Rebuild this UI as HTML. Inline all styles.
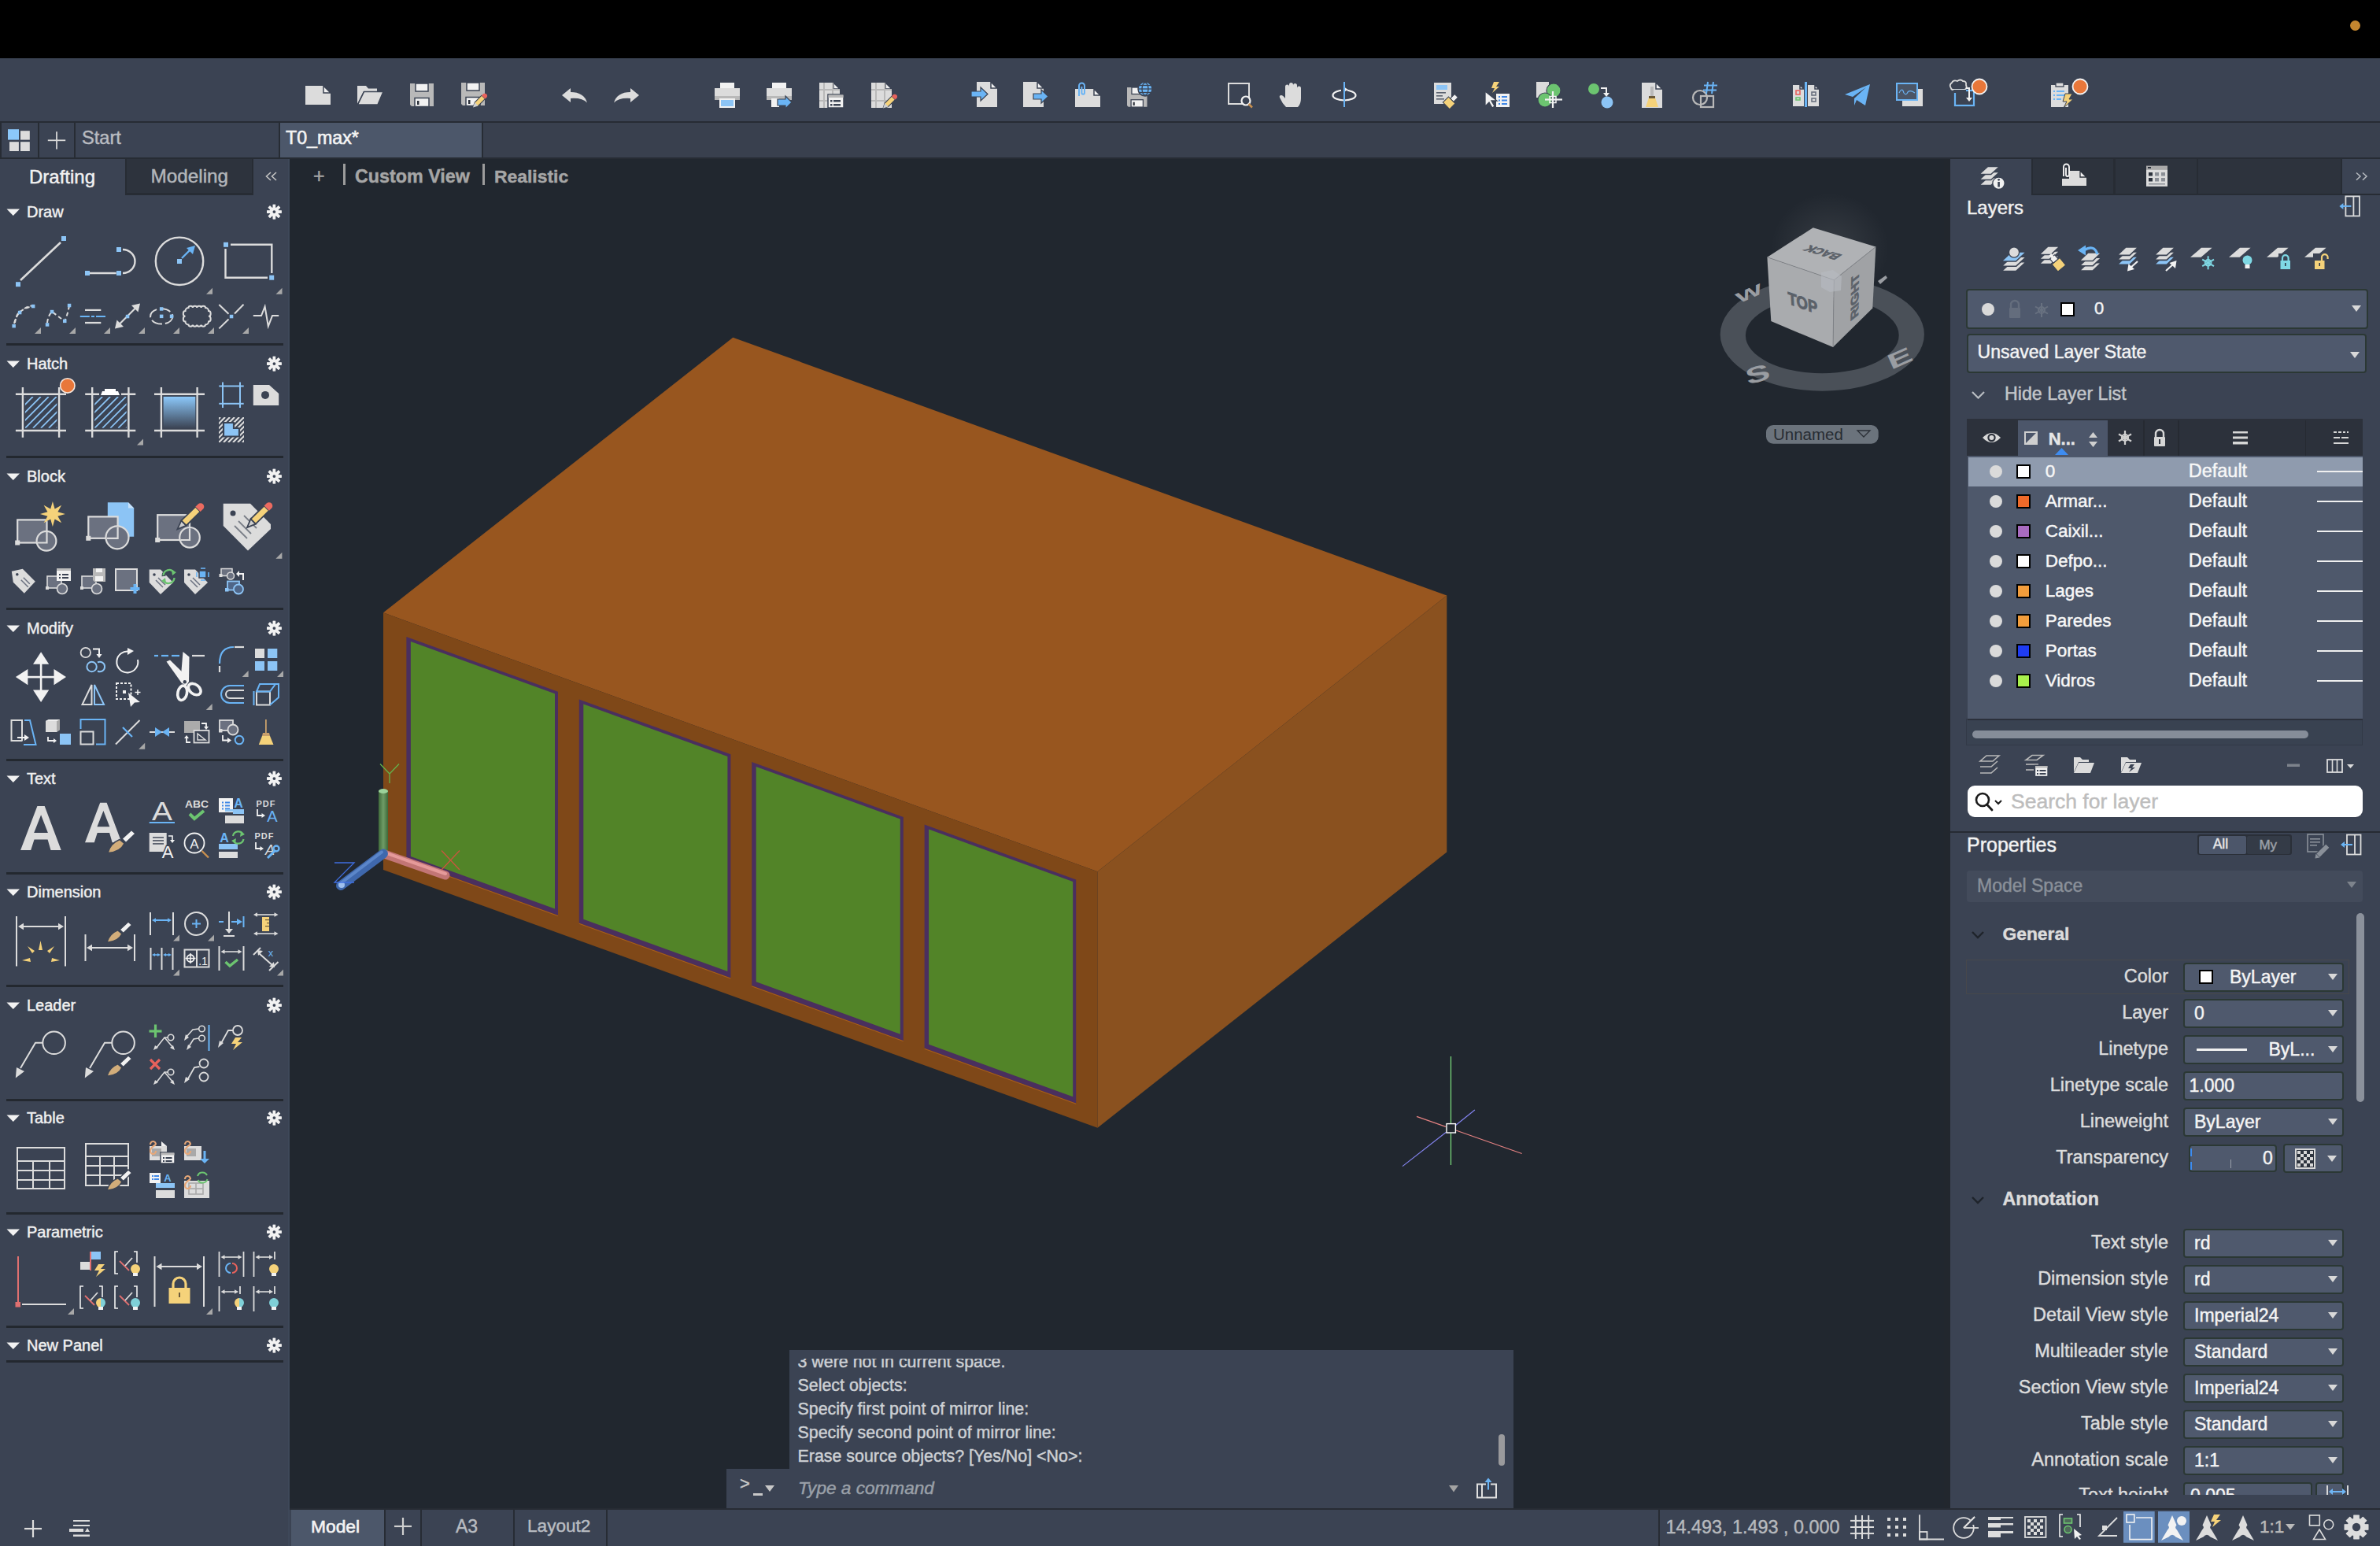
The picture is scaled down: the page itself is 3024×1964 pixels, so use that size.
<!DOCTYPE html>
<html><head><meta charset="utf-8">
<style>
*{margin:0;padding:0;box-sizing:border-box}
html,body{width:3024px;height:1964px;overflow:hidden;background:#21272f;font-family:"Liberation Sans",sans-serif;position:relative}
.a{position:absolute}
.t{position:absolute;white-space:nowrap;line-height:1;-webkit-text-stroke-width:0.45px}
svg{position:absolute;overflow:visible}
</style></head><body>
<div class="a" style="left:0px;top:0px;width:3024px;height:74px;background:#000;"></div>
<div class="a" style="left:2985.5px;top:25.5px;width:13px;height:13px;background:#c4862f;border-radius:7px"></div>
<div class="a" style="left:0px;top:74px;width:3024px;height:80px;background:#3b4353;"></div>
<div class="a" style="left:0px;top:154px;width:3024px;height:48px;background:#272c34;"></div>
<div class="a" style="left:2px;top:156px;width:46px;height:44px;background:#3b4353;"></div>
<div class="a" style="left:50px;top:156px;width:44px;height:44px;background:#3b4353;"></div>
<div class="a" style="left:96px;top:156px;width:258px;height:44px;background:#3b4353;"></div>
<div class="a" style="left:356px;top:156px;width:256px;height:44px;background:#4c576a;"></div>
<div class="a" style="left:614px;top:156px;width:2410px;height:44px;background:#39404e;"></div>
<div class="t" style="left:104px;top:164.42px;font-size:23.6px;color:#b9bcc1;">Start</div>
<div class="t" style="left:363px;top:164.36px;font-size:23.2px;color:#f4f4f4;-webkit-text-stroke:0.6px #f4f4f4">T0_max*</div>
<div class="a" style="left:0px;top:202px;width:368px;height:1762px;background:#3b4353;"></div>
<div class="a" style="left:366px;top:202px;width:2px;height:1762px;background:#3e4859;"></div>
<div class="a" style="left:159px;top:202px;width:163px;height:46px;background:#272c34;"></div>
<div class="a" style="left:161px;top:202px;width:159px;height:43px;background:#2d333d;"></div>
<div class="t" style="left:37px;top:212.68px;font-size:24px;color:#f2f2f2;">Drafting</div>
<div class="t" style="left:191.5px;top:212.43px;font-size:24.3px;color:#b3b6ba;">Modeling</div>
<div class="t" style="left:34px;top:258.67px;font-size:20px;color:#f0f0f0;">Draw</div>
<div class="t" style="left:34px;top:451.67px;font-size:20px;color:#f0f0f0;">Hatch</div>
<div class="t" style="left:34px;top:594.67px;font-size:20px;color:#f0f0f0;">Block</div>
<div class="t" style="left:34px;top:787.67px;font-size:20px;color:#f0f0f0;">Modify</div>
<div class="t" style="left:34px;top:978.67px;font-size:20px;color:#f0f0f0;">Text</div>
<div class="t" style="left:34px;top:1122.67px;font-size:20px;color:#f0f0f0;">Dimension</div>
<div class="t" style="left:34px;top:1266.67px;font-size:20px;color:#f0f0f0;">Leader</div>
<div class="t" style="left:34px;top:1409.67px;font-size:20px;color:#f0f0f0;">Table</div>
<div class="t" style="left:34px;top:1554.67px;font-size:20px;color:#f0f0f0;">Parametric</div>
<div class="t" style="left:34px;top:1698.67px;font-size:20px;color:#f0f0f0;">New Panel</div>
<div class="a" style="left:8px;top:436px;width:352px;height:3px;background:#23282f;"></div>
<div class="a" style="left:8px;top:579px;width:352px;height:3px;background:#23282f;"></div>
<div class="a" style="left:8px;top:772px;width:352px;height:3px;background:#23282f;"></div>
<div class="a" style="left:8px;top:964px;width:352px;height:3px;background:#23282f;"></div>
<div class="a" style="left:8px;top:1108px;width:352px;height:3px;background:#23282f;"></div>
<div class="a" style="left:8px;top:1251px;width:352px;height:3px;background:#23282f;"></div>
<div class="a" style="left:8px;top:1396px;width:352px;height:3px;background:#23282f;"></div>
<div class="a" style="left:8px;top:1540px;width:352px;height:3px;background:#23282f;"></div>
<div class="a" style="left:8px;top:1684px;width:352px;height:3px;background:#23282f;"></div>
<div class="a" style="left:8px;top:1728px;width:352px;height:3px;background:#23282f;"></div>
<div class="t" style="left:398px;top:210.84px;font-size:25px;color:#a3a3a3;">+</div>
<div class="a" style="left:436px;top:208px;width:3px;height:27px;background:#9c9c9c;"></div>
<div class="t" style="left:451px;top:212.78px;font-size:23.3px;color:#a6a6a6;font-weight:bold;">Custom View</div>
<div class="a" style="left:613px;top:208px;width:3px;height:27px;background:#9c9c9c;"></div>
<div class="t" style="left:628px;top:213.12px;font-size:22.9px;color:#a6a6a6;font-weight:bold;">Realistic</div>
<div class="a" style="left:2470px;top:202px;width:8px;height:1714px;background:#22272e;"></div>
<div class="a" style="left:2478px;top:202px;width:546px;height:1714px;background:#3b4353;"></div>
<div class="a" style="left:2581px;top:202px;width:443px;height:46px;background:#272c34;"></div>
<div class="a" style="left:2583px;top:202px;width:102px;height:44px;background:#2d333d;"></div>
<div class="a" style="left:2688px;top:202px;width:103px;height:44px;background:#2d333d;"></div>
<div class="a" style="left:2793px;top:202px;width:181px;height:44px;background:#2d333d;"></div>
<div class="a" style="left:2976px;top:202px;width:48px;height:44px;background:#3b4353;"></div>
<div class="t" style="left:2499px;top:251.68px;font-size:24px;color:#f0f0f0;">Layers</div>
<div class="a" style="left:368px;top:1916px;width:2656px;height:48px;background:#3b4353;"></div>
<div class="a" style="left:368px;top:1916px;width:2656px;height:2px;background:#272c34;"></div>
<svg style="left:0;top:0" width="3024" height="1964" viewBox="0 0 3024 1964"><polygon points="487.0,778.3 931.3,428.8 1838.3,756.5 1394.5,1107.3" fill="#98561f"/><polygon points="487.0,778.3 1394.5,1107.3 1394.5,1432.8 487.0,1105.0" fill="#7f4818"/><polygon points="1394.5,1107.3 1838.3,756.5 1838.3,1082.5 1394.5,1432.8" fill="#8a511f"/><polygon points="516.4,808.9 709.0,878.8 709.0,1162.8 516.4,1092.9" fill="#4a2f5e"/><polygon points="521.9,814.9 705.0,881.3 705.0,1154.5 521.9,1088.1" fill="#528428"/><line x1="516.4" y1="1093.7" x2="709.0" y2="1163.6" stroke="#a85e1c" stroke-width="1"/><polygon points="735.8,888.5 928.4,958.3 928.4,1242.3 735.8,1172.5" fill="#4a2f5e"/><polygon points="741.3,894.5 924.4,960.9 924.4,1234.1 741.3,1167.7" fill="#528428"/><line x1="735.8" y1="1173.3" x2="928.4" y2="1243.1" stroke="#a85e1c" stroke-width="1"/><polygon points="955.2,968.1 1147.8,1037.9 1147.8,1321.9 955.2,1252.1" fill="#4a2f5e"/><polygon points="960.7,974.0 1143.8,1040.5 1143.8,1313.7 960.7,1247.2" fill="#528428"/><line x1="955.2" y1="1252.9" x2="1147.8" y2="1322.7" stroke="#a85e1c" stroke-width="1"/><polygon points="1174.6,1047.6 1367.2,1117.5 1367.2,1401.5 1174.6,1331.6" fill="#4a2f5e"/><polygon points="1180.1,1053.6 1363.2,1120.0 1363.2,1393.2 1180.1,1326.8" fill="#528428"/><line x1="1174.6" y1="1332.4" x2="1367.2" y2="1402.3" stroke="#a85e1c" stroke-width="1"/><defs><linearGradient id="gy" x1="0" x2="1" y1="0" y2="0"><stop offset="0" stop-color="#3f6a3a"/><stop offset="0.5" stop-color="#6f9c66"/><stop offset="1" stop-color="#3f6a3a"/></linearGradient></defs><rect x="481" y="1004" width="12" height="80.5" fill="url(#gy)"/><ellipse cx="487" cy="1005" rx="6" ry="3" fill="#9cd39a"/><line x1="487" y1="1084.5" x2="566" y2="1112" stroke="#c27575" stroke-width="11" stroke-linecap="round"/><line x1="487" y1="1082.5" x2="566" y2="1110" stroke="#e59a9a" stroke-width="4" stroke-linecap="round"/><line x1="487" y1="1084.5" x2="433" y2="1125" stroke="#3f68ad" stroke-width="12" stroke-linecap="round"/><line x1="485" y1="1082.5" x2="433" y2="1122" stroke="#5b86c9" stroke-width="4" stroke-linecap="round"/><circle cx="434" cy="1124" r="4" fill="#9fc0ee"/><path d="M483,970.5 L495,983 L507,970.5 M495,983 L495,995" stroke="#64b24c" stroke-width="1.3" fill="none"/><path d="M561,1080.5 L584,1105 M584,1080.5 L561,1105" stroke="#c8573e" stroke-width="1.3" fill="none"/><path d="M425,1096 L450,1096 L425,1121 L450,1121" stroke="#3f6ee0" stroke-width="1.3" fill="none"/><line x1="1843.5" y1="1342" x2="1843.5" y2="1427" stroke="#7fe27f" stroke-width="1.2"/><line x1="1843.5" y1="1439.5" x2="1843.5" y2="1480" stroke="#7fe27f" stroke-width="1.2"/><line x1="1800" y1="1418.4" x2="1837" y2="1431.4" stroke="#e58282" stroke-width="1.2"/><line x1="1850" y1="1436" x2="1933.7" y2="1465.5" stroke="#e58282" stroke-width="1.2"/><line x1="1782" y1="1481.6" x2="1837.5" y2="1438.3" stroke="#8484f0" stroke-width="1.2"/><line x1="1849.6" y1="1429.5" x2="1873.9" y2="1410" stroke="#8484f0" stroke-width="1.2"/><rect x="1838" y="1427.6" width="11.4" height="11.4" fill="none" stroke="#ffffff" stroke-width="1.4"/><defs><radialGradient id="glow" cx="0.5" cy="0.5" r="0.5"><stop offset="0" stop-color="#ffffff" stop-opacity="0.10"/><stop offset="1" stop-color="#ffffff" stop-opacity="0"/></radialGradient></defs><ellipse cx="2325" cy="315" rx="75" ry="70" fill="url(#glow)"/><path fill-rule="evenodd" fill="#4a5058" d="M2185.7,424.8 a129.6,71.9 0 1,0 259.2,0 a129.6,71.9 0 1,0 -259.2,0 Z M2217.9,426 a97.4,48.3 0 1,0 194.8,0 a97.4,48.3 0 1,0 -194.8,0 Z"/><text x="0" y="0" font-family="Liberation Sans" font-size="30" font-weight="bold" fill="#9a9da2" transform="translate(2209,386) rotate(-24) scale(1.25,0.62)">W</text><text x="0" y="0" font-family="Liberation Sans" font-size="30" font-weight="bold" fill="#9a9da2" transform="translate(2221,489) rotate(-16) scale(1.55,0.95)">S</text><text x="0" y="0" font-family="Liberation Sans" font-size="30" font-weight="bold" fill="#9a9da2" transform="translate(2403,470) rotate(-24) scale(1.6,0.9)">E</text><polygon points="2386,357 2396,350 2398,353 2389,361" fill="#9a9da2"/><polygon points="2303.7,289.3 2383.4,313.5 2330.3,355.7 2245.4,326.7" fill="#b0b2b5"/><polygon points="2245.4,326.7 2330.3,355.7 2329.0,441.1 2250.3,408.1" fill="#a9abae"/><polygon points="2330.3,355.7 2383.4,313.5 2379.3,391.6 2329.0,441.1" fill="#a0a2a5"/><polyline points="2245.4,326.7 2330.3,355.7 2383.4,313.5" fill="none" stroke="#7d8085" stroke-width="0.8"/><line x1="2330.3" y1="355.7" x2="2329" y2="441.1" stroke="#7d8085" stroke-width="0.8"/><polygon points="2314,346 2329,343 2340,351 2339,369 2325,371 2314,365" fill="#b7bbc1" opacity="0.6"/><g transform="matrix(0.8490,0.2900,0.0490,0.8140,2245.4,326.7)"><text x="50" y="63" text-anchor="middle" font-family="Liberation Sans" font-weight="bold" font-size="27" fill="#5b6169" stroke="#5b6169" stroke-width="1.2" textLength="44" lengthAdjust="spacingAndGlyphs">TOP</text></g><g transform="matrix(0.5310,-0.4220,-0.0130,0.8540,2330.3,355.7)"><text transform="translate(60,50) rotate(-90)" x="0" y="0" text-anchor="middle" font-family="Liberation Sans" font-weight="bold" font-size="26" fill="#5b6169" stroke="#5b6169" stroke-width="1.2" textLength="66" lengthAdjust="spacingAndGlyphs">RIGHT</text></g><g transform="matrix(0.7970,0.2420,-0.5830,0.3740,2303.7,289.3)"><text transform="translate(52,42) rotate(180)" x="0" y="0" text-anchor="middle" font-family="Liberation Sans" font-weight="bold" font-size="24" fill="#5b6169" stroke="#5b6169" stroke-width="1.2" textLength="52" lengthAdjust="spacingAndGlyphs">BACK</text></g><rect x="2244" y="540" width="142.7" height="23.7" rx="9" fill="#6b737c"/><text x="2253" y="559" font-family="Liberation Sans" font-size="20.5" fill="#272c33">Unnamed</text><polygon points="2360,547 2376,547 2368,555" fill="none" stroke="#2a2f36" stroke-width="1.3"/></svg>
<div class="a" style="left:2497.5px;top:367px;width:511.5px;height:51px;background:#4f596d;border:2px solid #2b3834;border-radius:4px"></div>
<svg style="left:2518px;top:385px" width="16" height="16" viewBox="0 0 16 16"><circle cx="8" cy="8" r="8" fill="#d9d9d9"/></svg>
<svg style="left:2552px;top:381px" width="16" height="24" viewBox="0 0 16 24"><path d="M3,10 V6 a5,5 0 0 1 10,0 V10" fill="none" stroke="#646d7d" stroke-width="2.4"/><rect x="1" y="10" width="14" height="13" rx="1" fill="#646d7d"/></svg>
<svg style="left:2585px;top:385px" width="18" height="18" viewBox="0 0 18 18"><g stroke="#687180" stroke-width="2" fill="none"><line x1="9" y1="0" x2="9" y2="18"/><line x1="1" y1="4.5" x2="17" y2="13.5"/><line x1="1" y1="13.5" x2="17" y2="4.5"/><circle cx="9" cy="9" r="4"/></g></svg>
<div class="a" style="left:2618px;top:384px;width:18px;height:18px;background:#fff;border:2.5px solid #000"></div>
<div class="t" style="left:2661px;top:381.38px;font-size:22px;color:#f4f4f4;">0</div>
<svg style="left:2988px;top:388px" width="12" height="8" viewBox="0 0 12 8"><polygon points="0,0 12,0 6.0,8" fill="#d8d8d8"/></svg>
<div class="a" style="left:2499px;top:423.6px;width:507.5px;height:50.7px;background:#4f596d;border:2px solid #2b3834;border-radius:4px"></div>
<div class="t" style="left:2512.6px;top:436.23px;font-size:23px;color:#f4f4f4;">Unsaved Layer State</div>
<svg style="left:2986px;top:447px" width="12" height="8" viewBox="0 0 12 8"><polygon points="0,0 12,0 6.0,8" fill="#d8d8d8"/></svg>
<svg style="left:2505px;top:497px" width="17" height="10" viewBox="0 0 17 10"><polyline points="1,1 8.5,8.5 16,1" fill="none" stroke="#b9bdc2" stroke-width="2.2"/></svg>
<div class="t" style="left:2547px;top:489.36px;font-size:23.2px;color:#c3c6ca;">Hide Layer List</div>
<div class="a" style="left:2499px;top:532px;width:503px;height:47px;background:#2c313b;"></div>
<div class="a" style="left:2564px;top:534px;width:114px;height:45px;background:#4c566a;"></div>
<div class="a" style="left:2723px;top:534px;width:1.5px;height:45px;background:#262a32;"></div>
<div class="a" style="left:2767px;top:534px;width:1.5px;height:45px;background:#262a32;"></div>
<div class="a" style="left:2928.6px;top:534px;width:1.5px;height:45px;background:#262a32;"></div>
<div class="a" style="left:2500px;top:579px;width:502px;height:334px;background:#4e586b;"></div>
<div class="a" style="left:2501px;top:580.6px;width:501px;height:37.5px;background:#8f9bae;"></div>
<svg style="left:2528px;top:591px" width="16" height="16" viewBox="0 0 16 16"><circle cx="8" cy="8" r="8" fill="#dadada"/></svg>
<div class="a" style="left:2562.4px;top:590px;width:18px;height:18px;background:#ffffff;border:2.5px solid #000"></div>
<div class="t" style="left:2598.7px;top:587.95px;font-size:22.5px;color:#f7f7f7;">0</div>
<div class="t" style="left:2780.7px;top:587.11px;font-size:23.5px;color:#f7f7f7;">Default</div>
<div class="a" style="left:2943.7px;top:598px;width:58.3px;height:2.2px;background:#f0f0f0;"></div>
<svg style="left:2528px;top:629px" width="16" height="16" viewBox="0 0 16 16"><circle cx="8" cy="8" r="8" fill="#dadada"/></svg>
<div class="a" style="left:2562.4px;top:628px;width:18px;height:18px;background:#ef6a2a;border:2.5px solid #000"></div>
<div class="t" style="left:2598.7px;top:625.95px;font-size:22.5px;color:#f7f7f7;">Armar...</div>
<div class="t" style="left:2780.7px;top:625.11px;font-size:23.5px;color:#f7f7f7;">Default</div>
<div class="a" style="left:2943.7px;top:636px;width:58.3px;height:2.2px;background:#f0f0f0;"></div>
<svg style="left:2528px;top:667px" width="16" height="16" viewBox="0 0 16 16"><circle cx="8" cy="8" r="8" fill="#dadada"/></svg>
<div class="a" style="left:2562.4px;top:666px;width:18px;height:18px;background:#a86bc0;border:2.5px solid #000"></div>
<div class="t" style="left:2598.7px;top:663.95px;font-size:22.5px;color:#f7f7f7;">Caixil...</div>
<div class="t" style="left:2780.7px;top:663.11px;font-size:23.5px;color:#f7f7f7;">Default</div>
<div class="a" style="left:2943.7px;top:674px;width:58.3px;height:2.2px;background:#f0f0f0;"></div>
<svg style="left:2528px;top:705px" width="16" height="16" viewBox="0 0 16 16"><circle cx="8" cy="8" r="8" fill="#dadada"/></svg>
<div class="a" style="left:2562.4px;top:704px;width:18px;height:18px;background:#ffffff;border:2.5px solid #000"></div>
<div class="t" style="left:2598.7px;top:701.95px;font-size:22.5px;color:#f7f7f7;">Defpo...</div>
<div class="t" style="left:2780.7px;top:701.11px;font-size:23.5px;color:#f7f7f7;">Default</div>
<div class="a" style="left:2943.7px;top:712px;width:58.3px;height:2.2px;background:#f0f0f0;"></div>
<svg style="left:2528px;top:743px" width="16" height="16" viewBox="0 0 16 16"><circle cx="8" cy="8" r="8" fill="#dadada"/></svg>
<div class="a" style="left:2562.4px;top:742px;width:18px;height:18px;background:#f29d3c;border:2.5px solid #000"></div>
<div class="t" style="left:2598.7px;top:739.95px;font-size:22.5px;color:#f7f7f7;">Lages</div>
<div class="t" style="left:2780.7px;top:739.11px;font-size:23.5px;color:#f7f7f7;">Default</div>
<div class="a" style="left:2943.7px;top:750px;width:58.3px;height:2.2px;background:#f0f0f0;"></div>
<svg style="left:2528px;top:781px" width="16" height="16" viewBox="0 0 16 16"><circle cx="8" cy="8" r="8" fill="#dadada"/></svg>
<div class="a" style="left:2562.4px;top:780px;width:18px;height:18px;background:#f29d3c;border:2.5px solid #000"></div>
<div class="t" style="left:2598.7px;top:777.95px;font-size:22.5px;color:#f7f7f7;">Paredes</div>
<div class="t" style="left:2780.7px;top:777.11px;font-size:23.5px;color:#f7f7f7;">Default</div>
<div class="a" style="left:2943.7px;top:788px;width:58.3px;height:2.2px;background:#f0f0f0;"></div>
<svg style="left:2528px;top:819px" width="16" height="16" viewBox="0 0 16 16"><circle cx="8" cy="8" r="8" fill="#dadada"/></svg>
<div class="a" style="left:2562.4px;top:818px;width:18px;height:18px;background:#1f3cf2;border:2.5px solid #000"></div>
<div class="t" style="left:2598.7px;top:815.95px;font-size:22.5px;color:#f7f7f7;">Portas</div>
<div class="t" style="left:2780.7px;top:815.11px;font-size:23.5px;color:#f7f7f7;">Default</div>
<div class="a" style="left:2943.7px;top:826px;width:58.3px;height:2.2px;background:#f0f0f0;"></div>
<svg style="left:2528px;top:857px" width="16" height="16" viewBox="0 0 16 16"><circle cx="8" cy="8" r="8" fill="#dadada"/></svg>
<div class="a" style="left:2562.4px;top:856px;width:18px;height:18px;background:#a8f04c;border:2.5px solid #000"></div>
<div class="t" style="left:2598.7px;top:853.95px;font-size:22.5px;color:#f7f7f7;">Vidros</div>
<div class="t" style="left:2780.7px;top:853.11px;font-size:23.5px;color:#f7f7f7;">Default</div>
<div class="a" style="left:2943.7px;top:864px;width:58.3px;height:2.2px;background:#f0f0f0;"></div>
<svg style="left:2518px;top:547px" width="25" height="18" viewBox="0 0 25 18"><path d="M1,9 Q12.5,-3 24,9 Q12.5,21 1,9 Z" fill="#d9d9d9"/><circle cx="12.5" cy="9" r="5.2" fill="#2c313b"/><circle cx="12.5" cy="9" r="3" fill="#d9d9d9"/></svg>
<svg style="left:2572px;top:548px" width="17" height="17" viewBox="0 0 17 17"><rect x="1" y="1" width="15" height="15" fill="none" stroke="#cfcfcf" stroke-width="2"/><polygon points="16,1 16,16 1,16" fill="#cfcfcf"/></svg>
<div class="t" style="left:2602.7px;top:547.38px;font-size:22px;color:#e6e6e6;font-weight:bold;">N...</div>
<svg style="left:2654px;top:549px" width="11" height="19" viewBox="0 0 11 19"><polygon points="0,7 5.5,0 11,7" fill="#cfcfcf"/><polygon points="0,12 5.5,19 11,12" fill="#cfcfcf"/></svg>
<svg style="left:2611px;top:569px" width="17" height="9" viewBox="0 0 17 9"><polygon points="0,9 8.5,0 17,9" fill="#3e8cf0"/></svg>
<svg style="left:2691px;top:547px" width="18" height="18" viewBox="0 0 18 18"><g stroke="#d0d0d0" stroke-width="2.2" fill="none"><line x1="9" y1="0" x2="9" y2="18"/><line x1="1" y1="4.5" x2="17" y2="13.5"/><line x1="1" y1="13.5" x2="17" y2="4.5"/><circle cx="9" cy="9" r="4"/></g></svg>
<svg style="left:2736px;top:545px" width="16" height="22" viewBox="0 0 16 22"><path d="M3,10 V6 a5,5 0 0 1 10,0 V10" fill="none" stroke="#d6d6d6" stroke-width="2.4"/><rect x="1" y="10" width="14" height="12" rx="1" fill="#d6d6d6"/><rect x="7" y="13" width="2" height="6" fill="#2c313b"/></svg>
<svg style="left:2837px;top:548px" width="19" height="16" viewBox="0 0 19 16"><rect x="0" y="0" width="19" height="2.5" fill="#d6d6d6"/><rect x="0" y="6.5" width="19" height="3" fill="#d6d6d6"/><rect x="0" y="13" width="19" height="3.5" fill="#d6d6d6"/></svg>
<svg style="left:2965px;top:548px" width="19" height="16" viewBox="0 0 19 16"><g fill="#d6d6d6"><rect x="0" y="0" width="4" height="2"/><rect x="6" y="0" width="4" height="2"/><rect x="12" y="0" width="3" height="2"/><rect x="17" y="0" width="2" height="2"/><rect x="0" y="7" width="8" height="2"/><rect x="10" y="7" width="9" height="2"/><rect x="0" y="14" width="19" height="2"/></g></svg>
<div class="a" style="left:2498px;top:913px;width:504px;height:34px;background:#394251;border:1.5px solid #323947"></div>
<div class="a" style="left:2500px;top:913px;width:502px;height:2px;background:#2b303b;"></div>
<div class="a" style="left:2506px;top:928px;width:427px;height:10px;background:#868d99;border-radius:5px"></div>
<div class="a" style="left:2500px;top:998px;width:502px;height:40px;background:#ffffff;border-radius:9px"></div>
<svg style="left:2509px;top:1006px" width="35" height="26" viewBox="0 0 35 26"><circle cx="10" cy="10" r="8" fill="none" stroke="#1b1b1b" stroke-width="2.6"/><line x1="15.5" y1="16" x2="22" y2="23" stroke="#1b1b1b" stroke-width="2.8" stroke-linecap="round"/><polyline points="26,11 30,15 34,11" fill="none" stroke="#1b1b1b" stroke-width="2"/></svg>
<div class="t" style="left:2555px;top:1005.07px;font-size:26.5px;color:#bdbdbd;">Search for layer</div>
<div class="a" style="left:2478px;top:1055.5px;width:546px;height:2.5px;background:#262b33;"></div>
<div class="t" style="left:2499px;top:1060.54px;font-size:25px;color:#f2f2f2;">Properties</div>
<div class="a" style="left:2792px;top:1059.8px;width:120px;height:26.5px;background:#2a2f38;border-radius:3px"></div>
<div class="a" style="left:2794px;top:1061.5px;width:60px;height:23px;background:#4c566a;border-radius:2px"></div>
<div class="a" style="left:2855px;top:1061.5px;width:55px;height:23px;background:#343b47;border-radius:2px"></div>
<div class="t" style="left:2811.7px;top:1064.49px;font-size:17.5px;color:#e8e8e8;-webkit-text-stroke:0.4px #e8e8e8">All</div>
<div class="t" style="left:2870.4px;top:1064.91px;font-size:17px;color:#9ba0a8;">My</div>
<div class="a" style="left:2499px;top:1105.6px;width:503px;height:40px;background:#434b5b;border-radius:4px"></div>
<div class="t" style="left:2512px;top:1114.13px;font-size:23px;color:#8a9099;">Model Space</div>
<svg style="left:2982px;top:1120px" width="12" height="8" viewBox="0 0 12 8"><polygon points="0,0 12,0 6.0,8" fill="#7d838c"/></svg>
<div class="a" style="left:2994px;top:1160px;width:9.5px;height:240px;background:#8b919b;border-radius:5px"></div>
<svg style="left:2505px;top:1183px" width="16" height="10" viewBox="0 0 16 10"><polyline points="1,1 8,8 15,1" fill="none" stroke="#1f242b" stroke-width="2.4"/></svg>
<div class="t" style="left:2544.5px;top:1174.70px;font-size:22.8px;color:#dcdcdc;font-weight:bold;">General</div>
<div class="a" style="left:2498.4px;top:1218.5px;width:487px;height:44.5px;background:transparent;border:1px solid #47484b"></div>
<div class="a" style="left:2774.3px;top:1223px;width:204px;height:37.4px;background:#4f596d;border:2px solid #2b3834;border-radius:4px"></div>
<div class="a" style="left:2794px;top:1232px;width:18px;height:18px;background:#fff;border:2.5px solid #000"></div>
<div class="t" style="left:2833px;top:1229.53px;font-size:23px;color:#f4f4f4;">ByLayer</div>
<svg style="left:2958px;top:1236.5px" width="12" height="8" viewBox="0 0 12 8"><polygon points="0,0 12,0 6.0,8" fill="#d8d8d8"/></svg>
<div class="t" style="right:269px;top:1229.11px;font-size:23.5px;color:#dcdcdc;">Color</div>
<div class="a" style="left:2774.3px;top:1269px;width:204px;height:37.4px;background:#4f596d;border:2px solid #2b3834;border-radius:4px"></div>
<div class="t" style="left:2788px;top:1275.53px;font-size:23px;color:#f4f4f4;">0</div>
<svg style="left:2958px;top:1282.5px" width="12" height="8" viewBox="0 0 12 8"><polygon points="0,0 12,0 6.0,8" fill="#d8d8d8"/></svg>
<div class="t" style="right:269px;top:1275.11px;font-size:23.5px;color:#dcdcdc;">Layer</div>
<div class="a" style="left:2774.3px;top:1315px;width:204px;height:37.4px;background:#4f596d;border:2px solid #2b3834;border-radius:4px"></div>
<div class="a" style="left:2790.8px;top:1332px;width:64px;height:2.5px;background:#f0f0f0;"></div>
<div class="t" style="left:2882.5px;top:1321.53px;font-size:23px;color:#f4f4f4;">ByL...</div>
<svg style="left:2958px;top:1328.5px" width="12" height="8" viewBox="0 0 12 8"><polygon points="0,0 12,0 6.0,8" fill="#d8d8d8"/></svg>
<div class="t" style="right:269px;top:1321.11px;font-size:23.5px;color:#dcdcdc;">Linetype</div>
<div class="a" style="left:2774.3px;top:1361px;width:204px;height:37.4px;background:#4f596d;border:2px solid #2b3834;border-radius:4px"></div>
<div class="t" style="left:2781.5px;top:1367.53px;font-size:23px;color:#f4f4f4;">1.000</div>
<div class="t" style="right:269px;top:1367.11px;font-size:23.5px;color:#dcdcdc;">Linetype scale</div>
<div class="a" style="left:2774.3px;top:1407px;width:204px;height:37.4px;background:#4f596d;border:2px solid #2b3834;border-radius:4px"></div>
<div class="t" style="left:2788px;top:1413.53px;font-size:23px;color:#f4f4f4;">ByLayer</div>
<svg style="left:2958px;top:1420.5px" width="12" height="8" viewBox="0 0 12 8"><polygon points="0,0 12,0 6.0,8" fill="#d8d8d8"/></svg>
<div class="t" style="right:269px;top:1413.11px;font-size:23.5px;color:#dcdcdc;">Lineweight</div>
<div class="a" style="left:2780.7px;top:1454px;width:112.5px;height:34.6px;background:#4f596d;border:2px solid #2b3834;border-radius:4px"></div>
<div class="a" style="left:2782.5px;top:1459px;width:2px;height:10px;background:#3e8cf0;"></div>
<div class="a" style="left:2782.5px;top:1476px;width:2px;height:10px;background:#3e8cf0;"></div>
<div class="a" style="left:2834px;top:1473px;width:1px;height:11px;background:#9aa1ab;"></div>
<div class="t" style="left:2875px;top:1459.53px;font-size:23px;color:#f4f4f4;">0</div>
<div class="a" style="left:2900.6px;top:1453px;width:76.4px;height:37px;background:#4f596d;border:2px solid #2b3834;border-radius:4px"></div>
<svg style="left:2916px;top:1459px" width="26" height="26" viewBox="0 0 26 26"><rect x="1" y="1" width="24" height="24" fill="#2d333d" stroke="#d8d8d8" stroke-width="2"/><rect x="3" y="3" width="4" height="4" fill="#d8d8d8"/><rect x="3" y="11" width="4" height="4" fill="#d8d8d8"/><rect x="3" y="19" width="4" height="4" fill="#d8d8d8"/><rect x="7" y="7" width="4" height="4" fill="#d8d8d8"/><rect x="7" y="15" width="4" height="4" fill="#d8d8d8"/><rect x="11" y="3" width="4" height="4" fill="#d8d8d8"/><rect x="11" y="11" width="4" height="4" fill="#d8d8d8"/><rect x="11" y="19" width="4" height="4" fill="#d8d8d8"/><rect x="15" y="7" width="4" height="4" fill="#d8d8d8"/><rect x="15" y="15" width="4" height="4" fill="#d8d8d8"/><rect x="19" y="3" width="4" height="4" fill="#d8d8d8"/><rect x="19" y="11" width="4" height="4" fill="#d8d8d8"/><rect x="19" y="19" width="4" height="4" fill="#d8d8d8"/></svg>
<svg style="left:2957px;top:1468px" width="12" height="8" viewBox="0 0 12 8"><polygon points="0,0 12,0 6.0,8" fill="#d8d8d8"/></svg>
<div class="t" style="right:269px;top:1459.11px;font-size:23.5px;color:#dcdcdc;">Transparency</div>
<div class="a" style="left:2774.3px;top:1561px;width:204px;height:37.4px;background:#4f596d;border:2px solid #2b3834;border-radius:4px"></div>
<div class="t" style="left:2788px;top:1567.53px;font-size:23px;color:#f4f4f4;">rd</div>
<svg style="left:2958px;top:1574.5px" width="12" height="8" viewBox="0 0 12 8"><polygon points="0,0 12,0 6.0,8" fill="#d8d8d8"/></svg>
<div class="t" style="right:269px;top:1567.11px;font-size:23.5px;color:#dcdcdc;">Text style</div>
<div class="a" style="left:2774.3px;top:1607px;width:204px;height:37.4px;background:#4f596d;border:2px solid #2b3834;border-radius:4px"></div>
<div class="t" style="left:2788px;top:1613.53px;font-size:23px;color:#f4f4f4;">rd</div>
<svg style="left:2958px;top:1620.5px" width="12" height="8" viewBox="0 0 12 8"><polygon points="0,0 12,0 6.0,8" fill="#d8d8d8"/></svg>
<div class="t" style="right:269px;top:1613.11px;font-size:23.5px;color:#dcdcdc;">Dimension style</div>
<div class="a" style="left:2774.3px;top:1653px;width:204px;height:37.4px;background:#4f596d;border:2px solid #2b3834;border-radius:4px"></div>
<div class="t" style="left:2788px;top:1659.53px;font-size:23px;color:#f4f4f4;">Imperial24</div>
<svg style="left:2958px;top:1666.5px" width="12" height="8" viewBox="0 0 12 8"><polygon points="0,0 12,0 6.0,8" fill="#d8d8d8"/></svg>
<div class="t" style="right:269px;top:1659.11px;font-size:23.5px;color:#dcdcdc;">Detail View style</div>
<div class="a" style="left:2774.3px;top:1699px;width:204px;height:37.4px;background:#4f596d;border:2px solid #2b3834;border-radius:4px"></div>
<div class="t" style="left:2788px;top:1705.53px;font-size:23px;color:#f4f4f4;">Standard</div>
<svg style="left:2958px;top:1712.5px" width="12" height="8" viewBox="0 0 12 8"><polygon points="0,0 12,0 6.0,8" fill="#d8d8d8"/></svg>
<div class="t" style="right:269px;top:1705.11px;font-size:23.5px;color:#dcdcdc;">Multileader style</div>
<div class="a" style="left:2774.3px;top:1745px;width:204px;height:37.4px;background:#4f596d;border:2px solid #2b3834;border-radius:4px"></div>
<div class="t" style="left:2788px;top:1751.53px;font-size:23px;color:#f4f4f4;">Imperial24</div>
<svg style="left:2958px;top:1758.5px" width="12" height="8" viewBox="0 0 12 8"><polygon points="0,0 12,0 6.0,8" fill="#d8d8d8"/></svg>
<div class="t" style="right:269px;top:1751.11px;font-size:23.5px;color:#dcdcdc;">Section View style</div>
<div class="a" style="left:2774.3px;top:1791px;width:204px;height:37.4px;background:#4f596d;border:2px solid #2b3834;border-radius:4px"></div>
<div class="t" style="left:2788px;top:1797.53px;font-size:23px;color:#f4f4f4;">Standard</div>
<svg style="left:2958px;top:1804.5px" width="12" height="8" viewBox="0 0 12 8"><polygon points="0,0 12,0 6.0,8" fill="#d8d8d8"/></svg>
<div class="t" style="right:269px;top:1797.11px;font-size:23.5px;color:#dcdcdc;">Table style</div>
<div class="a" style="left:2774.3px;top:1837px;width:204px;height:37.4px;background:#4f596d;border:2px solid #2b3834;border-radius:4px"></div>
<div class="t" style="left:2788px;top:1843.53px;font-size:23px;color:#f4f4f4;">1:1</div>
<svg style="left:2958px;top:1850.5px" width="12" height="8" viewBox="0 0 12 8"><polygon points="0,0 12,0 6.0,8" fill="#d8d8d8"/></svg>
<div class="t" style="right:269px;top:1843.11px;font-size:23.5px;color:#dcdcdc;">Annotation scale</div>
<div class="a" style="left:2478px;top:1863px;width:546px;height:36px;overflow:hidden"><div class="a" style="left:296.3000000000002px;top:20px;width:164px;height:37px;background:#4f596d;border:2px solid #2b3834;border-radius:4px"></div><div class="a" style="left:464px;top:20px;width:36px;height:37px;background:#4f596d;border:2px solid #2b3834;border-radius:4px"></div><div class="t" style="right:269px;top:25.1px;font-size:23.5px;color:#dcdcdc">Text height</div><div class="t" style="left:305px;top:25.5px;font-size:23px;color:#f4f4f4">0.005</div><svg style="left:475px;top:24px" width="36" height="20"><line x1="4" y1="0" x2="4" y2="20" stroke="#d8d8d8" stroke-width="2"/><line x1="30" y1="0" x2="30" y2="20" stroke="#d8d8d8" stroke-width="2"/><line x1="8" y1="8" x2="26" y2="8" stroke="#6fb6f5" stroke-width="2"/><polygon points="6,8 11,4 11,12" fill="#6fb6f5"/><polygon points="28,8 23,4 23,12" fill="#6fb6f5"/></svg></div><svg style="left:2505px;top:1520px" width="16" height="10" viewBox="0 0 16 10"><polyline points="1,1 8,8 15,1" fill="none" stroke="#1f242b" stroke-width="2.4"/></svg>
<div class="t" style="left:2544.5px;top:1512.36px;font-size:23.2px;color:#dcdcdc;font-weight:bold;">Annotation</div>
<div class="a" style="left:1003px;top:1715px;width:920px;height:151px;background:#3b4353;"></div>
<div class="a" style="left:1003px;top:1726px;width:880px;height:140px;overflow:hidden"><div class="t" style="left:10.5px;top:-5.92px;font-size:21.4px;color:#cdd0d4">3 were not in current space.</div><div class="t" style="left:10.5px;top:24.08px;font-size:21.4px;color:#cdd0d4">Select objects:</div><div class="t" style="left:10.5px;top:54.08px;font-size:21.4px;color:#cdd0d4">Specify first point of mirror line:</div><div class="t" style="left:10.5px;top:84.08px;font-size:21.4px;color:#cdd0d4">Specify second point of mirror line:</div><div class="t" style="left:10.5px;top:114.08px;font-size:21.4px;color:#cdd0d4">Erase source objects? [Yes/No] &lt;No&gt;:</div></div><div class="a" style="left:1904px;top:1822px;width:8px;height:40px;background:#9a9a9c;border-radius:4px"></div>
<div class="a" style="left:923px;top:1866px;width:1000px;height:50px;background:#3b4353;"></div>
<div class="t" style="left:940px;top:1874.38px;font-size:22px;color:#c8c8c8;">&gt;</div>
<div class="a" style="left:957px;top:1897px;width:12px;height:2.5px;background:#c8c8c8;"></div>
<svg style="left:972px;top:1887px" width="12" height="8" viewBox="0 0 12 8"><polygon points="0,0 12,0 6,8" fill="#c8c8c8"/></svg>
<div class="t" style="left:1014px;top:1879.87px;font-size:22.6px;color:#9aa0a8;font-style:italic;">Type a command</div>
<svg style="left:1841px;top:1886.5px" width="12" height="8.5" viewBox="0 0 12 8.5"><polygon points="0,0 12,0 6,8.5" fill="#a3a3a3"/></svg>
<svg style="left:1876px;top:1877px" width="27" height="27" viewBox="0 0 27 27"><rect x="1" y="8.5" width="24" height="17" fill="none" stroke="#e0e0e0" stroke-width="2"/><line x1="7" y1="8.5" x2="7" y2="25.5" stroke="#e0e0e0" stroke-width="2"/><rect x="12" y="6" width="6" height="4" fill="#3b4353"/><line x1="15" y1="5" x2="15" y2="15.5" stroke="#6ab4f5" stroke-width="2"/><polygon points="10.5,6 15,0.5 19.5,6" fill="#6ab4f5"/></svg>
<div class="a" style="left:368px;top:1918px;width:2656px;height:46px;background:#3b4353;"></div>
<div class="a" style="left:368px;top:1916px;width:2656px;height:2px;background:#272c34;"></div>
<div class="a" style="left:370px;top:1918px;width:118px;height:46px;background:#4c576a;"></div>
<div class="a" style="left:488px;top:1918px;width:2px;height:46px;background:#272c34;"></div>
<div class="a" style="left:534px;top:1918px;width:2px;height:46px;background:#272c34;"></div>
<div class="a" style="left:652px;top:1918px;width:2px;height:46px;background:#272c34;"></div>
<div class="a" style="left:770px;top:1918px;width:2px;height:46px;background:#272c34;"></div>
<div class="a" style="left:2107px;top:1918px;width:2px;height:46px;background:#272c34;"></div>
<div class="t" style="left:395px;top:1927.70px;font-size:22.8px;color:#f4f4f4;-webkit-text-stroke:0.6px #f4f4f4">Model</div>
<svg style="left:500px;top:1927px" width="24" height="24" viewBox="0 0 24 24"><line x1="12" y1="1" x2="12" y2="23" stroke="#d0d0d0" stroke-width="2.2"/><line x1="1" y1="12" x2="23" y2="12" stroke="#d0d0d0" stroke-width="2.2"/></svg>
<div class="t" style="left:579px;top:1927.53px;font-size:23px;color:#b8bcc1;">A3</div>
<div class="t" style="left:670px;top:1927.87px;font-size:22.6px;color:#b8bcc1;">Layout2</div>
<svg style="left:31px;top:1931px" width="22" height="22" viewBox="0 0 22 22"><line x1="11" y1="0" x2="11" y2="22" stroke="#dcdcdc" stroke-width="2.2"/><line x1="0" y1="11" x2="22" y2="11" stroke="#dcdcdc" stroke-width="2.2"/></svg>
<svg style="left:88px;top:1931px" width="26" height="21" viewBox="0 0 26 21"><rect x="5" y="0" width="21" height="2" fill="#dcdcdc"/><rect x="5" y="6" width="21" height="2" fill="#dcdcdc"/><rect x="0" y="11" width="18" height="4" fill="#dcdcdc"/><polygon points="20,15 23,10 26,15" fill="#dcdcdc"/><rect x="5" y="18.5" width="21" height="2.5" fill="#dcdcdc"/></svg>
<div class="t" style="left:2116.5px;top:1928.59px;font-size:23.4px;color:#b6b9bd;">14.493, 1.493 , 0.000</div>
<svg style="left:0;top:0" width="370" height="1964" viewBox="0 0 370 1964"><polygon points="8.5,265.6 25,265.6 16.75,274" fill="#f2f2f2"/><rect x="346.7" y="259.8" width="3.4" height="18.6" fill="#f2f2f2" transform="rotate(0 348.4 269.1)"/><rect x="346.7" y="259.8" width="3.4" height="18.6" fill="#f2f2f2" transform="rotate(45 348.4 269.1)"/><rect x="346.7" y="259.8" width="3.4" height="18.6" fill="#f2f2f2" transform="rotate(90 348.4 269.1)"/><rect x="346.7" y="259.8" width="3.4" height="18.6" fill="#f2f2f2" transform="rotate(135 348.4 269.1)"/><rect x="346.7" y="259.8" width="3.4" height="18.6" fill="#f2f2f2" transform="rotate(180 348.4 269.1)"/><rect x="346.7" y="259.8" width="3.4" height="18.6" fill="#f2f2f2" transform="rotate(225 348.4 269.1)"/><rect x="346.7" y="259.8" width="3.4" height="18.6" fill="#f2f2f2" transform="rotate(270 348.4 269.1)"/><rect x="346.7" y="259.8" width="3.4" height="18.6" fill="#f2f2f2" transform="rotate(315 348.4 269.1)"/><circle cx="348.4" cy="269.1" r="5.766" fill="#f2f2f2"/><circle cx="348.4" cy="269.1" r="1.9" fill="#3b4353"/><polygon points="8.5,458.6 25,458.6 16.75,467" fill="#f2f2f2"/><rect x="346.7" y="452.8" width="3.4" height="18.6" fill="#f2f2f2" transform="rotate(0 348.4 462.1)"/><rect x="346.7" y="452.8" width="3.4" height="18.6" fill="#f2f2f2" transform="rotate(45 348.4 462.1)"/><rect x="346.7" y="452.8" width="3.4" height="18.6" fill="#f2f2f2" transform="rotate(90 348.4 462.1)"/><rect x="346.7" y="452.8" width="3.4" height="18.6" fill="#f2f2f2" transform="rotate(135 348.4 462.1)"/><rect x="346.7" y="452.8" width="3.4" height="18.6" fill="#f2f2f2" transform="rotate(180 348.4 462.1)"/><rect x="346.7" y="452.8" width="3.4" height="18.6" fill="#f2f2f2" transform="rotate(225 348.4 462.1)"/><rect x="346.7" y="452.8" width="3.4" height="18.6" fill="#f2f2f2" transform="rotate(270 348.4 462.1)"/><rect x="346.7" y="452.8" width="3.4" height="18.6" fill="#f2f2f2" transform="rotate(315 348.4 462.1)"/><circle cx="348.4" cy="462.1" r="5.766" fill="#f2f2f2"/><circle cx="348.4" cy="462.1" r="1.9" fill="#3b4353"/><polygon points="8.5,601.6 25,601.6 16.75,610" fill="#f2f2f2"/><rect x="346.7" y="595.8000000000001" width="3.4" height="18.6" fill="#f2f2f2" transform="rotate(0 348.4 605.1)"/><rect x="346.7" y="595.8000000000001" width="3.4" height="18.6" fill="#f2f2f2" transform="rotate(45 348.4 605.1)"/><rect x="346.7" y="595.8000000000001" width="3.4" height="18.6" fill="#f2f2f2" transform="rotate(90 348.4 605.1)"/><rect x="346.7" y="595.8000000000001" width="3.4" height="18.6" fill="#f2f2f2" transform="rotate(135 348.4 605.1)"/><rect x="346.7" y="595.8000000000001" width="3.4" height="18.6" fill="#f2f2f2" transform="rotate(180 348.4 605.1)"/><rect x="346.7" y="595.8000000000001" width="3.4" height="18.6" fill="#f2f2f2" transform="rotate(225 348.4 605.1)"/><rect x="346.7" y="595.8000000000001" width="3.4" height="18.6" fill="#f2f2f2" transform="rotate(270 348.4 605.1)"/><rect x="346.7" y="595.8000000000001" width="3.4" height="18.6" fill="#f2f2f2" transform="rotate(315 348.4 605.1)"/><circle cx="348.4" cy="605.1" r="5.766" fill="#f2f2f2"/><circle cx="348.4" cy="605.1" r="1.9" fill="#3b4353"/><polygon points="8.5,794.6 25,794.6 16.75,803" fill="#f2f2f2"/><rect x="346.7" y="788.8000000000001" width="3.4" height="18.6" fill="#f2f2f2" transform="rotate(0 348.4 798.1)"/><rect x="346.7" y="788.8000000000001" width="3.4" height="18.6" fill="#f2f2f2" transform="rotate(45 348.4 798.1)"/><rect x="346.7" y="788.8000000000001" width="3.4" height="18.6" fill="#f2f2f2" transform="rotate(90 348.4 798.1)"/><rect x="346.7" y="788.8000000000001" width="3.4" height="18.6" fill="#f2f2f2" transform="rotate(135 348.4 798.1)"/><rect x="346.7" y="788.8000000000001" width="3.4" height="18.6" fill="#f2f2f2" transform="rotate(180 348.4 798.1)"/><rect x="346.7" y="788.8000000000001" width="3.4" height="18.6" fill="#f2f2f2" transform="rotate(225 348.4 798.1)"/><rect x="346.7" y="788.8000000000001" width="3.4" height="18.6" fill="#f2f2f2" transform="rotate(270 348.4 798.1)"/><rect x="346.7" y="788.8000000000001" width="3.4" height="18.6" fill="#f2f2f2" transform="rotate(315 348.4 798.1)"/><circle cx="348.4" cy="798.1" r="5.766" fill="#f2f2f2"/><circle cx="348.4" cy="798.1" r="1.9" fill="#3b4353"/><polygon points="8.5,985.6 25,985.6 16.75,994" fill="#f2f2f2"/><rect x="346.7" y="979.8000000000001" width="3.4" height="18.6" fill="#f2f2f2" transform="rotate(0 348.4 989.1)"/><rect x="346.7" y="979.8000000000001" width="3.4" height="18.6" fill="#f2f2f2" transform="rotate(45 348.4 989.1)"/><rect x="346.7" y="979.8000000000001" width="3.4" height="18.6" fill="#f2f2f2" transform="rotate(90 348.4 989.1)"/><rect x="346.7" y="979.8000000000001" width="3.4" height="18.6" fill="#f2f2f2" transform="rotate(135 348.4 989.1)"/><rect x="346.7" y="979.8000000000001" width="3.4" height="18.6" fill="#f2f2f2" transform="rotate(180 348.4 989.1)"/><rect x="346.7" y="979.8000000000001" width="3.4" height="18.6" fill="#f2f2f2" transform="rotate(225 348.4 989.1)"/><rect x="346.7" y="979.8000000000001" width="3.4" height="18.6" fill="#f2f2f2" transform="rotate(270 348.4 989.1)"/><rect x="346.7" y="979.8000000000001" width="3.4" height="18.6" fill="#f2f2f2" transform="rotate(315 348.4 989.1)"/><circle cx="348.4" cy="989.1" r="5.766" fill="#f2f2f2"/><circle cx="348.4" cy="989.1" r="1.9" fill="#3b4353"/><polygon points="8.5,1129.6 25,1129.6 16.75,1138" fill="#f2f2f2"/><rect x="346.7" y="1123.8" width="3.4" height="18.6" fill="#f2f2f2" transform="rotate(0 348.4 1133.1)"/><rect x="346.7" y="1123.8" width="3.4" height="18.6" fill="#f2f2f2" transform="rotate(45 348.4 1133.1)"/><rect x="346.7" y="1123.8" width="3.4" height="18.6" fill="#f2f2f2" transform="rotate(90 348.4 1133.1)"/><rect x="346.7" y="1123.8" width="3.4" height="18.6" fill="#f2f2f2" transform="rotate(135 348.4 1133.1)"/><rect x="346.7" y="1123.8" width="3.4" height="18.6" fill="#f2f2f2" transform="rotate(180 348.4 1133.1)"/><rect x="346.7" y="1123.8" width="3.4" height="18.6" fill="#f2f2f2" transform="rotate(225 348.4 1133.1)"/><rect x="346.7" y="1123.8" width="3.4" height="18.6" fill="#f2f2f2" transform="rotate(270 348.4 1133.1)"/><rect x="346.7" y="1123.8" width="3.4" height="18.6" fill="#f2f2f2" transform="rotate(315 348.4 1133.1)"/><circle cx="348.4" cy="1133.1" r="5.766" fill="#f2f2f2"/><circle cx="348.4" cy="1133.1" r="1.9" fill="#3b4353"/><polygon points="8.5,1273.6 25,1273.6 16.75,1282" fill="#f2f2f2"/><rect x="346.7" y="1267.8" width="3.4" height="18.6" fill="#f2f2f2" transform="rotate(0 348.4 1277.1)"/><rect x="346.7" y="1267.8" width="3.4" height="18.6" fill="#f2f2f2" transform="rotate(45 348.4 1277.1)"/><rect x="346.7" y="1267.8" width="3.4" height="18.6" fill="#f2f2f2" transform="rotate(90 348.4 1277.1)"/><rect x="346.7" y="1267.8" width="3.4" height="18.6" fill="#f2f2f2" transform="rotate(135 348.4 1277.1)"/><rect x="346.7" y="1267.8" width="3.4" height="18.6" fill="#f2f2f2" transform="rotate(180 348.4 1277.1)"/><rect x="346.7" y="1267.8" width="3.4" height="18.6" fill="#f2f2f2" transform="rotate(225 348.4 1277.1)"/><rect x="346.7" y="1267.8" width="3.4" height="18.6" fill="#f2f2f2" transform="rotate(270 348.4 1277.1)"/><rect x="346.7" y="1267.8" width="3.4" height="18.6" fill="#f2f2f2" transform="rotate(315 348.4 1277.1)"/><circle cx="348.4" cy="1277.1" r="5.766" fill="#f2f2f2"/><circle cx="348.4" cy="1277.1" r="1.9" fill="#3b4353"/><polygon points="8.5,1416.6 25,1416.6 16.75,1425" fill="#f2f2f2"/><rect x="346.7" y="1410.8" width="3.4" height="18.6" fill="#f2f2f2" transform="rotate(0 348.4 1420.1)"/><rect x="346.7" y="1410.8" width="3.4" height="18.6" fill="#f2f2f2" transform="rotate(45 348.4 1420.1)"/><rect x="346.7" y="1410.8" width="3.4" height="18.6" fill="#f2f2f2" transform="rotate(90 348.4 1420.1)"/><rect x="346.7" y="1410.8" width="3.4" height="18.6" fill="#f2f2f2" transform="rotate(135 348.4 1420.1)"/><rect x="346.7" y="1410.8" width="3.4" height="18.6" fill="#f2f2f2" transform="rotate(180 348.4 1420.1)"/><rect x="346.7" y="1410.8" width="3.4" height="18.6" fill="#f2f2f2" transform="rotate(225 348.4 1420.1)"/><rect x="346.7" y="1410.8" width="3.4" height="18.6" fill="#f2f2f2" transform="rotate(270 348.4 1420.1)"/><rect x="346.7" y="1410.8" width="3.4" height="18.6" fill="#f2f2f2" transform="rotate(315 348.4 1420.1)"/><circle cx="348.4" cy="1420.1" r="5.766" fill="#f2f2f2"/><circle cx="348.4" cy="1420.1" r="1.9" fill="#3b4353"/><polygon points="8.5,1561.6 25,1561.6 16.75,1570" fill="#f2f2f2"/><rect x="346.7" y="1555.8" width="3.4" height="18.6" fill="#f2f2f2" transform="rotate(0 348.4 1565.1)"/><rect x="346.7" y="1555.8" width="3.4" height="18.6" fill="#f2f2f2" transform="rotate(45 348.4 1565.1)"/><rect x="346.7" y="1555.8" width="3.4" height="18.6" fill="#f2f2f2" transform="rotate(90 348.4 1565.1)"/><rect x="346.7" y="1555.8" width="3.4" height="18.6" fill="#f2f2f2" transform="rotate(135 348.4 1565.1)"/><rect x="346.7" y="1555.8" width="3.4" height="18.6" fill="#f2f2f2" transform="rotate(180 348.4 1565.1)"/><rect x="346.7" y="1555.8" width="3.4" height="18.6" fill="#f2f2f2" transform="rotate(225 348.4 1565.1)"/><rect x="346.7" y="1555.8" width="3.4" height="18.6" fill="#f2f2f2" transform="rotate(270 348.4 1565.1)"/><rect x="346.7" y="1555.8" width="3.4" height="18.6" fill="#f2f2f2" transform="rotate(315 348.4 1565.1)"/><circle cx="348.4" cy="1565.1" r="5.766" fill="#f2f2f2"/><circle cx="348.4" cy="1565.1" r="1.9" fill="#3b4353"/><polygon points="8.5,1705.6 25,1705.6 16.75,1714" fill="#f2f2f2"/><rect x="346.7" y="1699.8" width="3.4" height="18.6" fill="#f2f2f2" transform="rotate(0 348.4 1709.1)"/><rect x="346.7" y="1699.8" width="3.4" height="18.6" fill="#f2f2f2" transform="rotate(45 348.4 1709.1)"/><rect x="346.7" y="1699.8" width="3.4" height="18.6" fill="#f2f2f2" transform="rotate(90 348.4 1709.1)"/><rect x="346.7" y="1699.8" width="3.4" height="18.6" fill="#f2f2f2" transform="rotate(135 348.4 1709.1)"/><rect x="346.7" y="1699.8" width="3.4" height="18.6" fill="#f2f2f2" transform="rotate(180 348.4 1709.1)"/><rect x="346.7" y="1699.8" width="3.4" height="18.6" fill="#f2f2f2" transform="rotate(225 348.4 1709.1)"/><rect x="346.7" y="1699.8" width="3.4" height="18.6" fill="#f2f2f2" transform="rotate(270 348.4 1709.1)"/><rect x="346.7" y="1699.8" width="3.4" height="18.6" fill="#f2f2f2" transform="rotate(315 348.4 1709.1)"/><circle cx="348.4" cy="1709.1" r="5.766" fill="#f2f2f2"/><circle cx="348.4" cy="1709.1" r="1.9" fill="#3b4353"/><line x1="26" y1="356" x2="77" y2="308" stroke="#dcdcdc" stroke-width="2.6"/><rect x="20.0" y="358.2" width="6" height="6" fill="#8cc4f5"/><rect x="78.0" y="300.0" width="6" height="6" fill="#8cc4f5"/><line x1="114" y1="347" x2="147.7" y2="347" stroke="#dcdcdc" stroke-width="2.4"/><path d="M156,317 A15.5,15 0 0 1 156,347" fill="none" stroke="#dcdcdc" stroke-width="2.4"/><rect x="108.0" y="344.0" width="6" height="6" fill="#8cc4f5"/><rect x="148.0" y="344.0" width="6" height="6" fill="#8cc4f5"/><rect x="148.0" y="314.0" width="6" height="6" fill="#8cc4f5"/><circle cx="228" cy="331.8" r="30.2" fill="none" stroke="#dcdcdc" stroke-width="2.4"/><line x1="231" y1="328" x2="244" y2="315" stroke="#6ab4f5" stroke-width="2.4"/><polygon points="248,312 245,323 237,315" fill="#6ab4f5"/><rect x="225.0" y="329.0" width="6" height="6" fill="#8cc4f5"/><polyline points="293,310.8 345.3,310.8 345.3,347" fill="none" stroke="#dcdcdc" stroke-width="2.4"/><polyline points="286.5,316 286.5,352.8 340,352.8" fill="none" stroke="#dcdcdc" stroke-width="2.4"/><rect x="284.0" y="307.8" width="6" height="6" fill="#8cc4f5"/><rect x="342.2" y="349.7" width="6" height="6" fill="#8cc4f5"/><polygon points="270,373.7 262,373.7 270,365.7" fill="#a8a8a8"/><polygon points="358.5,373.7 350.5,373.7 358.5,365.7" fill="#a8a8a8"/><path d="M19,410 Q21,398 26,395 M31,392 Q36,389 40,388.5" fill="none" stroke="#dcdcdc" stroke-width="2" stroke-dasharray="5,3"/><path d="M18,411 Q22,392 42,389" fill="none" stroke="#dcdcdc" stroke-width="2" stroke-dasharray="5,3.5"/><rect x="15.4" y="411.9" width="4.5" height="4.5" fill="#8cc4f5"/><rect x="22.9" y="394.8" width="4.5" height="4.5" fill="#8cc4f5"/><rect x="39.9" y="386.8" width="4.5" height="4.5" fill="#8cc4f5"/><path d="M60,410 Q61,401 66,396 L82,407.9 Q86,400 88,388" fill="none" stroke="#dcdcdc" stroke-width="2" stroke-dasharray="5,3.5"/><rect x="57.8" y="410.2" width="4.5" height="4.5" fill="#8cc4f5"/><rect x="63.8" y="393.8" width="4.5" height="4.5" fill="#8cc4f5"/><rect x="80.0" y="405.6" width="4.5" height="4.5" fill="#8cc4f5"/><rect x="85.8" y="385.8" width="4.5" height="4.5" fill="#8cc4f5"/><rect x="108" y="392.8" width="20.3" height="2.2" fill="#dcdcdc"/><rect x="108" y="408.9" width="20.3" height="2.3" fill="#dcdcdc"/><rect x="101.8" y="401" width="12" height="2" fill="#6ab4f5"/><rect x="116" y="401" width="4" height="2" fill="#6ab4f5"/><rect x="122" y="401" width="12" height="2" fill="#6ab4f5"/><line x1="150" y1="413.5" x2="174" y2="389.5" stroke="#dcdcdc" stroke-width="2.2"/><polygon points="146,417.4 148.5,406.5 157,415" fill="#dcdcdc"/><polygon points="178,385.5 175.5,396.5 167,388" fill="#dcdcdc"/><rect x="159.8" y="399.8" width="4.5" height="4.5" fill="#8cc4f5"/><ellipse cx="205.2" cy="401.9" rx="14.1" ry="9.7" fill="none" stroke="#dcdcdc" stroke-width="2" stroke-dasharray="14,4"/><rect x="202.9" y="399.6" width="4.5" height="4.5" fill="#8cc4f5"/><rect x="202.9" y="390.2" width="4.5" height="4.5" fill="#8cc4f5"/><rect x="215.8" y="399.6" width="4.5" height="4.5" fill="#8cc4f5"/><path d="M239.5,391 a2.6875,2.15 0 0 1 5.375,0 a2.6875,2.15 0 0 1 5.375,0 a2.6875,2.15 0 0 1 5.375,0 a2.6875,2.15 0 0 1 5.375,0 a4,4 0 0 1 4,4 a2.7,3.375 0 0 1 0,6.75 a2.7,3.375 0 0 1 0,6.75 a4,4 0 0 1 -4,4 a2.6875,2.15 0 0 1 -5.375,0 a2.6875,2.15 0 0 1 -5.375,0 a2.6875,2.15 0 0 1 -5.375,0 a2.6875,2.15 0 0 1 -5.375,0 a4,4 0 0 1 -4,-4 a2.7,3.375 0 0 1 0,-6.75 a2.7,3.375 0 0 1 0,-6.75 a4,4 0 0 1 4,-4 Z" fill="none" stroke="#dcdcdc" stroke-width="2"/><g stroke="#dcdcdc" stroke-width="2"><line x1="278.3" y1="387" x2="290.5" y2="398.8"/><line x1="309.5" y1="386.8" x2="298" y2="398.5"/><line x1="278.3" y1="417.4" x2="290.5" y2="405.5"/></g><rect x="291.8" y="399.8" width="4.5" height="4.5" fill="#8cc4f5"/><polyline points="321.8,401.1 332,401.1 336.6,389.5 340.8,414.5 346,401.1 354.2,401.1" fill="none" stroke="#dcdcdc" stroke-width="2"/><polygon points="52,424 44,424 52,416" fill="#a8a8a8"/><polygon points="96,424 88,424 96,416" fill="#a8a8a8"/><polygon points="140,424 132,424 140,416" fill="#a8a8a8"/><polygon points="184,424 176,424 184,416" fill="#a8a8a8"/><polygon points="228,424 220,424 228,416" fill="#a8a8a8"/><polygon points="272,424 264,424 272,416" fill="#a8a8a8"/><polygon points="316,424 308,424 316,416" fill="#a8a8a8"/></svg>
<svg style="left:0;top:0" width="370" height="1964" viewBox="0 0 370 1964"><g stroke="#dcdcdc" stroke-width="2.4"><line x1="19.9" y1="500.8" x2="84" y2="500.8"/><line x1="19.9" y1="547" x2="84" y2="547"/><line x1="28.9" y1="492" x2="28.9" y2="555.8"/><line x1="75.1" y1="492" x2="75.1" y2="555.8"/></g><clipPath id="hc31"><rect x="31.9" y="503.9" width="40.4" height="39.9"/></clipPath><g clip-path="url(#hc31)" stroke="#8cc4f5" stroke-width="1.8"><line x1="-18.1" y1="543.8" x2="21.799999999999997" y2="503.9"/><line x1="-8.100000000000001" y1="543.8" x2="31.799999999999997" y2="503.9"/><line x1="1.8999999999999986" y1="543.8" x2="41.8" y2="503.9"/><line x1="11.899999999999999" y1="543.8" x2="51.8" y2="503.9"/><line x1="21.9" y1="543.8" x2="61.8" y2="503.9"/><line x1="31.9" y1="543.8" x2="71.8" y2="503.9"/><line x1="41.9" y1="543.8" x2="81.8" y2="503.9"/><line x1="51.9" y1="543.8" x2="91.8" y2="503.9"/><line x1="61.9" y1="543.8" x2="101.8" y2="503.9"/><line x1="71.9" y1="543.8" x2="111.80000000000001" y2="503.9"/><line x1="81.9" y1="543.8" x2="121.80000000000001" y2="503.9"/><line x1="91.9" y1="543.8" x2="131.8" y2="503.9"/><line x1="101.9" y1="543.8" x2="141.8" y2="503.9"/></g><circle cx="85.8" cy="489.9" r="9.2" fill="#e8773a" stroke="#f5e6dc" stroke-width="1.6"/><g stroke="#dcdcdc" stroke-width="2.4"><line x1="108.19999999999999" y1="500.8" x2="172.3" y2="500.8"/><line x1="108.19999999999999" y1="547" x2="172.3" y2="547"/><line x1="117.19999999999999" y1="492" x2="117.19999999999999" y2="555.8"/><line x1="163.39999999999998" y1="492" x2="163.39999999999998" y2="555.8"/></g><clipPath id="hc120"><rect x="120.2" y="503.9" width="40.4" height="39.9"/></clipPath><g clip-path="url(#hc120)" stroke="#8cc4f5" stroke-width="1.8"><line x1="70.2" y1="543.8" x2="110.1" y2="503.9"/><line x1="80.2" y1="543.8" x2="120.1" y2="503.9"/><line x1="90.2" y1="543.8" x2="130.1" y2="503.9"/><line x1="100.2" y1="543.8" x2="140.1" y2="503.9"/><line x1="110.2" y1="543.8" x2="150.1" y2="503.9"/><line x1="120.2" y1="543.8" x2="160.1" y2="503.9"/><line x1="130.2" y1="543.8" x2="170.1" y2="503.9"/><line x1="140.2" y1="543.8" x2="180.1" y2="503.9"/><line x1="150.2" y1="543.8" x2="190.1" y2="503.9"/><line x1="160.2" y1="543.8" x2="200.1" y2="503.9"/><line x1="170.2" y1="543.8" x2="210.1" y2="503.9"/><line x1="180.2" y1="543.8" x2="220.1" y2="503.9"/><line x1="190.2" y1="543.8" x2="230.1" y2="503.9"/></g><rect x="126" y="494" width="28" height="9" fill="#3b4353"/><path d="M128,502 L130,497 L133,497 L133,494 L147,494 L147,497 L150,497 L152,502 Z" fill="#ffffff"/><polygon points="182,565.6 174,565.6 182,557.6" fill="#a8a8a8"/><defs><linearGradient id="hg" x1="0" y1="0" x2="0" y2="1"><stop offset="0" stop-color="#8cc8fa"/><stop offset="1" stop-color="#3b4353"/></linearGradient></defs><g stroke="#dcdcdc" stroke-width="2.4"><line x1="196" y1="500.8" x2="260" y2="500.8"/><line x1="196" y1="547" x2="260" y2="547"/><line x1="204.9" y1="492" x2="204.9" y2="555.8"/><line x1="250.6" y1="492" x2="250.6" y2="555.8"/></g><rect x="207.6" y="503.9" width="40.7" height="40.4" fill="url(#hg)"/><g stroke="#8cc4f5" stroke-width="2"><line x1="278.3" y1="490.5" x2="309.7" y2="490.5"/><line x1="278.3" y1="512.8" x2="309.7" y2="512.8"/><line x1="283" y1="485.5" x2="283" y2="517.9"/><line x1="305" y1="485.5" x2="305" y2="517.9"/></g><polygon points="321.8,489 342,489 354.2,500 354.2,515 321.8,515" fill="#dcdcdc"/><circle cx="337" cy="501.9" r="5" fill="#3b4353"/><clipPath id="hs"><rect x="278" y="529.9" width="32" height="32"/></clipPath><rect x="278" y="529.9" width="32" height="32" fill="#3b4353"/><g clip-path="url(#hs)" stroke="#dcdcdc" stroke-width="2.2"><line x1="242" y1="562" x2="274" y2="530"/><line x1="248" y1="562" x2="280" y2="530"/><line x1="254" y1="562" x2="286" y2="530"/><line x1="260" y1="562" x2="292" y2="530"/><line x1="266" y1="562" x2="298" y2="530"/><line x1="272" y1="562" x2="304" y2="530"/><line x1="278" y1="562" x2="310" y2="530"/><line x1="284" y1="562" x2="316" y2="530"/><line x1="290" y1="562" x2="322" y2="530"/><line x1="296" y1="562" x2="328" y2="530"/><line x1="302" y1="562" x2="334" y2="530"/><line x1="308" y1="562" x2="340" y2="530"/></g><polygon points="284,537 297,537 297,544 304,544 304,554.5 284,554.5" fill="#8cc4f5" stroke="#3b4353" stroke-width="2.2"/><rect x="22.2" y="660.4" width="37.3" height="29.1" fill="#6b7180" stroke="#dcdcdc" stroke-width="2.2"/><circle cx="59" cy="687.2" r="12.4" fill="#6b7180" stroke="#dcdcdc" stroke-width="2.2"/><path d="M59.5,676.0400000000001 V689.5 H47.84" fill="none" stroke="#dcdcdc" stroke-width="2.2"/><rect x="19.2" y="686.5" width="6" height="6" fill="#dcdcdc"/><circle cx="66.9" cy="653" r="11" fill="#3b4353"/><polygon points="66.9,637.0 69.6,646.5 78.2,641.7 73.4,650.3 82.9,653.0 73.4,655.7 78.2,664.3 69.6,659.5 66.9,669.0 64.2,659.5 55.6,664.3 60.4,655.7 50.9,653.0 60.4,650.3 55.6,641.7 64.2,646.5" fill="#f5d27a"/><polygon points="136.8,638.2 163,638.2 170.2,645.5 170.2,681.7 136.8,681.7" fill="#8cc4f5"/><polygon points="163,638.2 170.2,645.5 163,645.5" fill="#c8e2fa"/><rect x="112.3" y="656.4" width="37.3" height="27.4" fill="#6b7180" stroke="#dcdcdc" stroke-width="2.2"/><circle cx="149" cy="682.8" r="14.5" fill="#6b7180" stroke="#dcdcdc" stroke-width="2.2"/><path d="M149.6,669.75 V683.8 H135.95" fill="none" stroke="#dcdcdc" stroke-width="2.2"/><rect x="109.3" y="680.8" width="6" height="6" fill="#dcdcdc"/><rect x="200.2" y="654.2" width="40.8" height="31.8" fill="#6b7180" stroke="#dcdcdc" stroke-width="2.2"/><circle cx="241" cy="682.8" r="12.8" fill="#6b7180" stroke="#dcdcdc" stroke-width="2.2"/><path d="M241.0,671.28 V686.0 H229.48" fill="none" stroke="#dcdcdc" stroke-width="2.2"/><rect x="197.2" y="683.0" width="6" height="6" fill="#dcdcdc"/><g transform="translate(225.4,672.4) rotate(-44.378209749622954)"><polygon points="0,0 11.402768304232087,-4.5 11.402768304232087,4.5" fill="#cfcfcf" stroke="#3b4353" stroke-width="1.8"/><rect x="11.402768304232087" y="-4.5" width="25.086090269310592" height="9" fill="#f5d27a" stroke="#3b4353" stroke-width="1.8"/><path d="M36.48885857354268,-4.5 H41.11107321692835 A4.5,4.5 0 0 1 41.11107321692835,4.5 H36.48885857354268 Z" fill="#ec6b60"/></g><polygon points="283.7,639.8 318,639.8 344,666 344,672 315,699.6 283.7,668" fill="#dcdcdc"/><circle cx="296" cy="652" r="3.5" fill="#3b4353"/><g stroke="#7a7f88" stroke-width="1.8"><line x1="298" y1="668" x2="314" y2="684"/><line x1="303" y1="662" x2="319" y2="678"/><line x1="310" y1="655" x2="326" y2="671"/></g><g transform="translate(314,670) rotate(-44.53419091723501)"><polygon points="0,0 10.872126057032267,-4.5 10.872126057032267,4.5" fill="#cfcfcf" stroke="#3b4353" stroke-width="1.8"/><rect x="10.872126057032267" y="-4.5" width="23.918677325470988" height="9" fill="#f5d27a" stroke="#3b4353" stroke-width="1.8"/><path d="M34.790803382503256,-4.5 H38.98850422812907 A4.5,4.5 0 0 1 38.98850422812907,4.5 H34.790803382503256 Z" fill="#ec6b60"/></g><polygon points="358.4,709.7 350.4,709.7 358.4,701.7" fill="#a8a8a8"/><g transform="translate(14.8,722.8) rotate(0)"><polygon points="0,3 14,0 30,16 16,31 2,17" fill="#dcdcdc"/><circle cx="7" cy="7" r="1.8" fill="#3b4353"/><g stroke="#6b7180" stroke-width="1.5"><line x1="12" y1="14" x2="21" y2="23"/><line x1="15" y1="11" x2="23" y2="19"/></g></g><rect x="60" y="732" width="18" height="15" fill="#6b7180" stroke="#dcdcdc" stroke-width="1.6"/><circle cx="79" cy="748" r="6.5" fill="#6b7180" stroke="#dcdcdc" stroke-width="1.6"/><rect x="58" y="745" width="4" height="4" fill="#dcdcdc"/><rect x="72" y="722" width="18" height="16" fill="#f2f2f2"/><rect x="72" y="722" width="18" height="3" fill="#b9b9b9"/><g fill="#3b4353"><rect x="75" y="729" width="2" height="2"/><rect x="79" y="729" width="8" height="2"/><rect x="75" y="733" width="2" height="2"/><rect x="79" y="733" width="8" height="2"/></g><rect x="104" y="732" width="18" height="15" fill="#6b7180" stroke="#dcdcdc" stroke-width="1.6"/><circle cx="123" cy="748" r="6.5" fill="#6b7180" stroke="#dcdcdc" stroke-width="1.6"/><rect x="102" y="745" width="4" height="4" fill="#dcdcdc"/><path d="M118,722 H134 V739 H120 L118,737 Z" fill="#b9b9b9"/><rect x="122" y="722" width="8" height="5" fill="#f2f2f2"/><rect x="121" y="732" width="10" height="6" fill="#f2f2f2"/><rect x="147" y="723" width="27" height="27" fill="#6b7180" stroke="#dcdcdc" stroke-width="2"/><g stroke="#6ab4f5" stroke-width="4"><line x1="171.5" y1="742" x2="171.5" y2="754"/><line x1="165.5" y1="748" x2="177.5" y2="748"/></g><polygon points="189.7,723.5 204,723.5 220,740 204,755 189.7,740" fill="#dcdcdc"/><circle cx="196" cy="730" r="1.8" fill="#3b4353"/><g stroke="#6b7180" stroke-width="1.5"><line x1="198" y1="737" x2="207" y2="746"/><line x1="201" y1="734" x2="210" y2="743"/></g><path d="M208,732 A7,7 0 0 1 221,728" fill="none" stroke="#3b4353" stroke-width="5"/><path d="M207.5,731 A7.5,7.5 0 0 1 221,727" fill="none" stroke="#6cc470" stroke-width="2.4"/><path d="M221.5,734 A7.5,7.5 0 0 1 208,738" fill="none" stroke="#6cc470" stroke-width="2.4"/><polygon points="218,724 224,727 219,731" fill="#6cc470"/><polygon points="211,741 205,738 210,734" fill="#6cc470"/><polygon points="234,723.5 248,723.5 264,740 248,755 234,740" fill="#dcdcdc"/><circle cx="240" cy="730" r="1.8" fill="#3b4353"/><g stroke="#6b7180" stroke-width="1.5"><line x1="242" y1="737" x2="251" y2="746"/><line x1="245" y1="734" x2="254" y2="743"/></g><rect x="253" y="725" width="9" height="9" fill="#6ab4f5" stroke="#3b4353" stroke-width="1.5"/><g stroke="#6ab4f5" stroke-width="1.6"><line x1="250" y1="727" x2="250" y2="733"/><line x1="265" y1="727" x2="265" y2="733"/><line x1="255" y1="722" x2="261" y2="722"/><line x1="255" y1="737" x2="261" y2="737"/></g><rect x="281" y="722.5" width="14" height="9" fill="#6b7180" stroke="#dcdcdc" stroke-width="1.5"/><circle cx="293" cy="731.5" r="4.5" fill="#6b7180" stroke="#dcdcdc" stroke-width="1.5"/><rect x="278.5" y="729" width="4" height="4" fill="#dcdcdc"/><path d="M309,737 V729 H301" fill="none" stroke="#f2f2f2" stroke-width="2"/><polygon points="300,729 304,725 304,733" fill="#f2f2f2"/><rect x="289" y="738.5" width="15" height="11" fill="#4f6688" stroke="#8cc4f5" stroke-width="1.8"/><circle cx="303" cy="748.5" r="6" fill="#4f6688" stroke="#8cc4f5" stroke-width="1.8"/><rect x="286" y="747" width="4.5" height="4.5" fill="#8cc4f5"/><g fill="#f2f2f2"><rect x="50.8" y="838" width="2.6" height="44"/><rect x="30" y="858.8" width="44" height="2.6"/><polygon points="52.1,828.2 62.2,843.7 42,843.7"/><polygon points="52.1,892 62.2,876.5 42,876.5"/><polygon points="19.9,860.1 35.4,850 35.4,870.2"/><polygon points="84,860.1 68.5,850 68.5,870.2"/></g><circle cx="108.8" cy="829" r="6.2" fill="none" stroke="#dcdcdc" stroke-width="1.8"/><path d="M118,824.5 H126 V832" fill="none" stroke="#f2f2f2" stroke-width="2"/><polygon points="122.5,831 129.5,831 126,836" fill="#f2f2f2"/><circle cx="116.6" cy="847" r="6.2" fill="none" stroke="#8cc4f5" stroke-width="2"/><path d="M124,841.5 A6.2,6.2 0 1 1 124,852.5" fill="none" stroke="#8cc4f5" stroke-width="2"/><path d="M165,827.8 A13.5,13.5 0 1 0 175,838" fill="none" stroke="#f2f2f2" stroke-width="2"/><polygon points="162,823 170,827 162,832" fill="#f2f2f2"/><g stroke="#6ab4f5" stroke-width="2.2"><line x1="196" y1="833" x2="201" y2="833"/><line x1="205" y1="833" x2="214" y2="833"/><line x1="218" y1="833" x2="228" y2="833"/></g><line x1="244" y1="833" x2="260" y2="833" stroke="#dcdcdc" stroke-width="2.2"/><g fill="#f2f2f2"><polygon points="232.5,828 240.5,834.5 240,866 236,872 229.5,864"/><polygon points="211.5,840.5 216,838.5 240,862 237,870 231,868"/></g><ellipse cx="231.7" cy="880.3" rx="5.8" ry="9.3" fill="none" stroke="#f2f2f2" stroke-width="3.6" transform="rotate(12 231.7 880.3)"/><ellipse cx="247.2" cy="875.6" rx="8.8" ry="6" fill="none" stroke="#f2f2f2" stroke-width="3.6" transform="rotate(38 247.2 875.6)"/><circle cx="234.8" cy="866.3" r="2.2" fill="#3b4353"/><path d="M279,843 Q279,822 297,822" fill="none" stroke="#6ab4f5" stroke-width="2.2"/><line x1="298" y1="822" x2="310" y2="822" stroke="#dcdcdc" stroke-width="2.2"/><line x1="279" y1="846" x2="279" y2="854" stroke="#dcdcdc" stroke-width="2.2"/><rect x="324" y="824" width="12" height="12" fill="#dcdcdc"/><rect x="340" y="824" width="12.3" height="12" fill="#8cc4f5"/><rect x="324" y="840" width="12" height="12" fill="#8cc4f5"/><rect x="340" y="840" width="12.3" height="12" fill="#8cc4f5"/><polygon points="360,860 352,860 360,852" fill="#a8a8a8"/><polygon points="315.6,860 307.6,860 315.6,852" fill="#a8a8a8"/><polygon points="269.7,902 261.7,902 269.7,894" fill="#a8a8a8"/><polygon points="104.5,895 116.5,895 116.5,870" fill="none" stroke="#dcdcdc" stroke-width="2"/><polygon points="132,895 120,895 120,870" fill="none" stroke="#8cc4f5" stroke-width="2"/><rect x="148" y="868" width="18.5" height="20" fill="none" stroke="#f2f2f2" stroke-width="2" stroke-dasharray="3,2"/><rect x="156" y="877" width="4" height="4" fill="#f2f2f2"/><polygon points="163,880 178,892 171,892.5 166,898" fill="#f2f2f2"/><g stroke="#f2f2f2" stroke-width="1.5"><line x1="175" y1="876" x2="175" y2="883"/><line x1="171.5" y1="879.5" x2="178.5" y2="879.5"/></g><path d="M310,871 H292 A11,11 0 0 0 292,893 H310" fill="none" stroke="#6ab4f5" stroke-width="2"/><path d="M310,877 H292 A5,5 0 0 0 292,887 H310" fill="none" stroke="#dcdcdc" stroke-width="2"/><rect x="326" y="878.5" width="17" height="17" fill="none" stroke="#dcdcdc" stroke-width="2"/><polygon points="330,869 350,869 343,878.5 326,878.5" fill="none" stroke="#6ab4f5" stroke-width="2"/><polyline points="350,869 354,869 354,886 343,895.5" fill="none" stroke="#6ab4f5" stroke-width="2"/><line x1="322.5" y1="878" x2="322.5" y2="896" stroke="#6ab4f5" stroke-width="2"/><polyline points="28.5,941 14.5,941 14.5,915 28,915 28,941" fill="none" stroke="#dcdcdc" stroke-width="2"/><polyline points="31,915 38,915 45.5,946 30,946" fill="none" stroke="#6ab4f5" stroke-width="2"/><line x1="22" y1="937" x2="33" y2="937" stroke="#f2f2f2" stroke-width="2"/><polygon points="31,933 37,937 31,941" fill="#f2f2f2"/><polygon points="58,916 62,914 76,914 76,927 72,930 58,930" fill="#dcdcdc"/><polygon points="72,916 76,914 76,927 72,930" fill="#a9a9a9"/><polygon points="58,916 62,914 76,914 72,916" fill="#efefef"/><rect x="76" y="932" width="14" height="14" fill="#8cc4f5"/><path d="M61,936 V941 H69" fill="none" stroke="#f2f2f2" stroke-width="1.8"/><polygon points="68,938 72,941 68,944" fill="#f2f2f2"/><polyline points="102.5,926 102.5,914 133.5,914 133.5,945.5 122,945.5" fill="none" stroke="#6ab4f5" stroke-width="2"/><rect x="102.5" y="929.5" width="16" height="16" fill="none" stroke="#dcdcdc" stroke-width="2"/><line x1="147" y1="945.5" x2="177.5" y2="915" stroke="#dcdcdc" stroke-width="2"/><line x1="156" y1="924" x2="168" y2="936" stroke="#6ab4f5" stroke-width="2.2"/><line x1="190" y1="930" x2="222" y2="930" stroke="#dcdcdc" stroke-width="2"/><polygon points="197,924 206,930 197,936" fill="#6ab4f5"/><polygon points="215,924 206,930 215,936" fill="#6ab4f5"/><rect x="234" y="916" width="20" height="15" fill="#ababab"/><rect x="246.5" y="928" width="19" height="15.5" fill="#3b4353" stroke="#dcdcdc" stroke-width="1.8"/><polygon points="251,940 261,940 251,932" fill="none" stroke="#dcdcdc" stroke-width="1.5"/><path d="M256,919 H262 V924" fill="none" stroke="#f2f2f2" stroke-width="1.8"/><polygon points="259,923 265,923 262,927" fill="#f2f2f2"/><path d="M242,943 H237 V937" fill="none" stroke="#f2f2f2" stroke-width="1.8"/><polygon points="234,938 240,938 237,934" fill="#f2f2f2"/><rect x="279" y="915" width="17" height="13" fill="#6b7180" stroke="#dcdcdc" stroke-width="1.8"/><circle cx="296" cy="927" r="6.5" fill="#6b7180" stroke="#dcdcdc" stroke-width="1.8"/><rect x="278" y="926" width="4.5" height="4.5" fill="#dcdcdc"/><path d="M283,934 V940.5 H290" fill="none" stroke="#f2f2f2" stroke-width="1.8"/><polygon points="289,937 294,940.5 289,944" fill="#f2f2f2"/><circle cx="304" cy="940" r="5.3" fill="none" stroke="#6ab4f5" stroke-width="2"/><rect x="337" y="914" width="1.8" height="17" fill="#c9a06b"/><polygon points="334,931 342,931 343,935 333,935" fill="#c9a06b"/><polygon points="333,935 343,935 347.5,946 328.8,946" fill="#f5d27a"/><polygon points="184.2,951.8 176.2,951.8 184.2,943.8" fill="#a8a8a8"/><path fill-rule="evenodd" d="M26.1,1080.0 L47.4,1024.0 L56.7,1024.0 L77.7,1080.0 L64.5,1080.0 L60.6,1066.4 L43.5,1066.4 L39.2,1080.0 Z M43.2,1057.9 L60.9,1057.9 L52.1,1035.3 Z" fill="#dcdcdc"/><path fill-rule="evenodd" d="M108.0,1070.2 L127.2,1019.8 L135.6,1019.8 L154.5,1070.2 L142.6,1070.2 L139.1,1058.0 L123.7,1058.0 L119.8,1070.2 Z M123.4,1050.3 L139.3,1050.3 L131.4,1030.0 Z" fill="#dcdcdc"/><g transform="translate(137,1054.5) scale(1.0)"><path d="M0,29 Q3,17 15,12 L21,17 Q16,28 0,29 Z" fill="#d2ad7a" stroke="#3b4353" stroke-width="1.5"/><polygon points="18,11 30,0 35,4.5 23,16" fill="#f2f2f2" stroke="#3b4353" stroke-width="1.5"/></g><text x="206" y="1042" text-anchor="middle" font-family="Liberation Sans" font-size="34" fill="#dcdcdc" textLength="26" lengthAdjust="spacingAndGlyphs">A</text><rect x="189.7" y="1044" width="32.3" height="2" fill="#6ab4f5"/><text x="250" y="1026" text-anchor="middle" font-family="Liberation Sans" font-weight="bold" font-size="12.5" fill="#dcdcdc" textLength="30" lengthAdjust="spacingAndGlyphs">ABC</text><polyline points="241,1034 247,1040 259,1030" fill="none" stroke="#6cc470" stroke-width="4"/><rect x="278" y="1014" width="18" height="18" fill="#f2f2f2"/><g fill="#3f87e6"><rect x="282" y="1018.5" width="2" height="2"/><rect x="286" y="1018.5" width="6" height="2"/><rect x="282" y="1022.5" width="2" height="2"/><rect x="286" y="1022.5" width="6" height="2"/><rect x="282" y="1026.5" width="2" height="2"/><rect x="286" y="1026.5" width="6" height="2"/></g><text x="303" y="1026" text-anchor="middle" font-family="Liberation Sans" font-weight="bold" font-size="16" fill="#6ab4f5">A</text><rect x="286" y="1028" width="24" height="3" fill="#8cc4f5"/><rect x="286" y="1036" width="24" height="10" fill="#dcdcdc"/><rect x="296" y="1028" width="14" height="6" fill="#8cc4f5"/><text x="338" y="1025" text-anchor="middle" font-family="Liberation Sans" font-weight="bold" font-size="11" fill="#dcdcdc" letter-spacing="1">PDF</text><path d="M327,1028 V1036 H333" fill="none" stroke="#f2f2f2" stroke-width="1.8"/><polygon points="332.5,1033 337,1036 332.5,1039" fill="#f2f2f2"/><text x="346" y="1044" text-anchor="middle" font-family="Liberation Sans" font-size="20" fill="#6ab4f5">A</text><rect x="189.7" y="1058" width="22" height="24" fill="#dcdcdc"/><g fill="#5d6370"><rect x="194" y="1063" width="14" height="1.8"/><rect x="194" y="1067" width="14" height="1.8"/><rect x="194" y="1071" width="14" height="1.8"/></g><path d="M214,1062 H219 V1068" fill="none" stroke="#f2f2f2" stroke-width="1.6"/><polygon points="216,1067 222,1067 219,1071" fill="#f2f2f2"/><text x="213" y="1090" text-anchor="middle" font-family="Liberation Sans" font-size="22" fill="#3b4353" stroke="#3b4353" stroke-width="3">A</text><text x="213" y="1090" text-anchor="middle" font-family="Liberation Sans" font-size="22" fill="#f2f2f2">A</text><circle cx="247" cy="1071" r="12.5" fill="none" stroke="#f2f2f2" stroke-width="1.8"/><text x="247" y="1077.5" text-anchor="middle" font-family="Liberation Sans" font-size="17" fill="#f2f2f2">A</text><line x1="256.5" y1="1081" x2="265" y2="1089.5" stroke="#c9904f" stroke-width="2.4"/><text x="285" y="1070" text-anchor="middle" font-family="Liberation Sans" font-weight="bold" font-size="16" fill="#6ab4f5">A</text><rect x="278" y="1072" width="24" height="7" fill="#8cc4f5"/><rect x="278" y="1082" width="24" height="8" fill="#dcdcdc"/><path d="M296,1062 A7,7 0 0 1 309,1060" fill="none" stroke="#6cc470" stroke-width="2.2"/><path d="M309.5,1066 A7,7 0 0 1 296.5,1068" fill="none" stroke="#6cc470" stroke-width="2.2"/><polygon points="306,1056 311,1060 305,1063" fill="#6cc470"/><polygon points="299,1072 294,1068 300,1065" fill="#6cc470"/><text x="336" y="1066" text-anchor="middle" font-family="Liberation Sans" font-weight="bold" font-size="11" fill="#dcdcdc" letter-spacing="1">PDF</text><path d="M325,1070 V1078 H331" fill="none" stroke="#f2f2f2" stroke-width="1.8"/><polygon points="330.5,1075 335,1078 330.5,1081" fill="#f2f2f2"/><text x="343" y="1086" text-anchor="middle" font-family="Liberation Sans" font-style="italic" font-size="18" fill="#dcdcdc">A</text><path d="M340,1090 L350,1080" stroke="#6ab4f5" stroke-width="3"/><circle cx="351" cy="1078" r="3.5" fill="none" stroke="#6ab4f5" stroke-width="2.4"/><g stroke="#dcdcdc" stroke-width="2"><line x1="21" y1="1164" x2="21" y2="1227.6"/><line x1="83" y1="1164" x2="83" y2="1227.6"/></g><line x1="29" y1="1177" x2="75" y2="1177" stroke="#dcdcdc" stroke-width="2"/><polygon points="23,1177 30,1172.8 30,1181.2" fill="#dcdcdc"/><polygon points="81,1177 74,1172.8 74,1181.2" fill="#dcdcdc"/><g fill="#f5d27a"><polygon points="51.5,1195 49,1207 54,1207"/><polygon points="35,1202 41,1211 44,1208"/><polygon points="69,1202 60,1208 63,1211"/><polygon points="28,1220 38,1217 39,1222"/><polygon points="76,1220 66,1217 65,1222"/></g><g stroke="#dcdcdc" stroke-width="2"><line x1="108.5" y1="1187" x2="108.5" y2="1221"/><line x1="171" y1="1187" x2="171" y2="1221"/></g><line x1="116" y1="1204" x2="163" y2="1204" stroke="#dcdcdc" stroke-width="2"/><polygon points="110,1204 117,1199.8 117,1208.2" fill="#dcdcdc"/><polygon points="169,1204 162,1199.8 162,1208.2" fill="#dcdcdc"/><g transform="translate(136,1171) scale(0.9)"><path d="M0,29 Q3,17 15,12 L21,17 Q16,28 0,29 Z" fill="#d2ad7a" stroke="#3b4353" stroke-width="1.5"/><polygon points="18,11 30,0 35,4.5 23,16" fill="#f2f2f2" stroke="#3b4353" stroke-width="1.5"/></g><g stroke="#dcdcdc" stroke-width="2"><line x1="191" y1="1159" x2="191" y2="1188"/><line x1="220" y1="1159" x2="220" y2="1188"/></g><line x1="197" y1="1169" x2="214" y2="1169" stroke="#6ab4f5" stroke-width="2"/><polygon points="193,1169 198,1166.2 198,1171.8" fill="#6ab4f5"/><polygon points="218,1169 213,1166.2 213,1171.8" fill="#6ab4f5"/><circle cx="249.5" cy="1173.5" r="14.5" fill="none" stroke="#dcdcdc" stroke-width="2"/><g stroke="#6ab4f5" stroke-width="2"><line x1="249.5" y1="1168" x2="249.5" y2="1179"/><line x1="244" y1="1173.5" x2="255" y2="1173.5"/></g><line x1="291" y1="1158" x2="291" y2="1185" stroke="#dcdcdc" stroke-width="2"/><polygon points="286,1180 296,1180 291,1186" fill="#dcdcdc"/><line x1="284" y1="1189" x2="298" y2="1189" stroke="#dcdcdc" stroke-width="2"/><g stroke="#6ab4f5" stroke-width="2"><line x1="278" y1="1171" x2="284" y2="1171"/><line x1="294" y1="1171" x2="304" y2="1171"/><line x1="309.5" y1="1164" x2="309.5" y2="1178"/></g><polygon points="308,1171 301,1167 301,1175" fill="#6ab4f5"/><line x1="326" y1="1162" x2="349.5" y2="1162" stroke="#dcdcdc" stroke-width="1.6"/><polygon points="322,1162 327,1159.2 327,1164.8" fill="#dcdcdc"/><polygon points="353.5,1162 348.5,1159.2 348.5,1164.8" fill="#dcdcdc"/><line x1="326" y1="1186" x2="349.5" y2="1186" stroke="#dcdcdc" stroke-width="1.6"/><polygon points="322,1186 327,1183.2 327,1188.8" fill="#dcdcdc"/><polygon points="353.5,1186 348.5,1183.2 348.5,1188.8" fill="#dcdcdc"/><rect x="333" y="1165" width="9" height="18" fill="#f5d27a"/><g fill="#6b5a3a"><rect x="337" y="1168" width="5" height="1.2"/><rect x="339" y="1172" width="3" height="1.2"/><rect x="337" y="1176" width="5" height="1.2"/></g><polygon points="228,1195.5 220,1195.5 228,1187.5" fill="#a8a8a8"/><polygon points="272,1195.5 264,1195.5 272,1187.5" fill="#a8a8a8"/><g stroke="#dcdcdc" stroke-width="2"><line x1="191.5" y1="1204" x2="191.5" y2="1232"/><line x1="205.5" y1="1204" x2="205.5" y2="1232"/><line x1="219.5" y1="1204" x2="219.5" y2="1232"/></g><line x1="196" y1="1213" x2="201" y2="1213" stroke="#6ab4f5" stroke-width="1.6"/><polygon points="193,1213 197,1210.9 197,1215.1" fill="#6ab4f5"/><polygon points="204,1213 200,1210.9 200,1215.1" fill="#6ab4f5"/><line x1="210" y1="1213" x2="215" y2="1213" stroke="#6ab4f5" stroke-width="1.6"/><polygon points="207,1213 211,1210.9 211,1215.1" fill="#6ab4f5"/><polygon points="218,1213 214,1210.9 214,1215.1" fill="#6ab4f5"/><rect x="234.5" y="1206.5" width="31" height="22" fill="none" stroke="#dcdcdc" stroke-width="2"/><line x1="250" y1="1206.5" x2="250" y2="1228.5" stroke="#dcdcdc" stroke-width="2"/><circle cx="242" cy="1217.5" r="4.5" fill="none" stroke="#f2f2f2" stroke-width="1.8"/><g stroke="#f2f2f2" stroke-width="1.5"><line x1="242" y1="1211" x2="242" y2="1224"/><line x1="235.5" y1="1217.5" x2="248.5" y2="1217.5"/></g><text x="258" y="1226" text-anchor="middle" font-family="Liberation Sans" font-size="14" fill="#f2f2f2">.1</text><g stroke="#dcdcdc" stroke-width="2"><line x1="278.5" y1="1202" x2="278.5" y2="1233"/><line x1="309.5" y1="1202" x2="309.5" y2="1233"/></g><line x1="284.5" y1="1209" x2="303.5" y2="1209" stroke="#dcdcdc" stroke-width="1.6"/><polygon points="280.5,1209 285.5,1206.2 285.5,1211.8" fill="#dcdcdc"/><polygon points="307.5,1209 302.5,1206.2 302.5,1211.8" fill="#dcdcdc"/><polyline points="286.5,1222 292,1227 302,1219" fill="none" stroke="#6cc470" stroke-width="3.4"/><g stroke="#dcdcdc" stroke-width="2"><line x1="322" y1="1213" x2="331" y2="1204"/><line x1="342" y1="1233" x2="353.5" y2="1222"/><line x1="329" y1="1211" x2="347" y2="1227"/></g><polygon points="327,1207 334,1208 328,1214" fill="#dcdcdc"/><polygon points="349,1229 342,1228 348,1222" fill="#dcdcdc"/><text x="344" y="1215" text-anchor="middle" font-family="Liberation Sans" font-size="13" fill="#6ab4f5">x</text><polygon points="228,1239.5 220,1239.5 228,1231.5" fill="#a8a8a8"/><polygon points="360,1239.5 352,1239.5 360,1231.5" fill="#a8a8a8"/><g transform="translate(14,1310) scale(1.0)"><circle cx="54.6" cy="14.8" r="14.3" fill="none" stroke="#dcdcdc" stroke-width="2"/><polyline points="40.3,14.8 31,14.8 12,47" fill="none" stroke="#dcdcdc" stroke-width="2"/><polygon points="5.8,59.5 7,46 17,51" fill="#dcdcdc"/></g><g transform="translate(102,1310) scale(1.0)"><circle cx="54.6" cy="14.8" r="14.3" fill="none" stroke="#dcdcdc" stroke-width="2"/><polyline points="40.3,14.8 31,14.8 12,47" fill="none" stroke="#dcdcdc" stroke-width="2"/><polygon points="5.8,59.5 7,46 17,51" fill="#dcdcdc"/></g><g transform="translate(136,1341) scale(0.9)"><path d="M0,29 Q3,17 15,12 L21,17 Q16,28 0,29 Z" fill="#d2ad7a" stroke="#3b4353" stroke-width="1.5"/><polygon points="18,11 30,0 35,4.5 23,16" fill="#f2f2f2" stroke="#3b4353" stroke-width="1.5"/></g><g stroke="#6cc470" stroke-width="3.2"><line x1="197.5" y1="1301.5" x2="197.5" y2="1318"/><line x1="189.5" y1="1310" x2="205.5" y2="1310"/></g><circle cx="217" cy="1318" r="3.8" fill="none" stroke="#dcdcdc" stroke-width="1.6"/><polyline points="213,1318 209,1318 198,1332" fill="none" stroke="#dcdcdc" stroke-width="1.6"/><polyline points="209,1318 220,1331" fill="none" stroke="#dcdcdc" stroke-width="1.6"/><polygon points="195,1334 197,1328 201,1331" fill="#dcdcdc"/><polygon points="222,1334 220,1328 216,1331" fill="#dcdcdc"/><circle cx="256.5" cy="1307" r="3.8" fill="none" stroke="#dcdcdc" stroke-width="1.6"/><polyline points="252.5,1307 245,1308 236,1318" fill="none" stroke="#dcdcdc" stroke-width="1.6"/><circle cx="256.5" cy="1319" r="3.8" fill="none" stroke="#dcdcdc" stroke-width="1.6"/><polyline points="252.5,1319 246,1320 239,1331" fill="none" stroke="#dcdcdc" stroke-width="1.6"/><polygon points="234,1322 236,1314 240,1318" fill="#dcdcdc"/><polygon points="237,1334 239,1327 243,1330" fill="#dcdcdc"/><line x1="265.5" y1="1302" x2="265.5" y2="1335" stroke="#6ab4f5" stroke-width="2"/><circle cx="302" cy="1309" r="6" fill="none" stroke="#dcdcdc" stroke-width="1.8"/><polyline points="296,1309 290,1309 280,1327" fill="none" stroke="#dcdcdc" stroke-width="1.8"/><polygon points="277,1331 279,1322 284,1325" fill="#dcdcdc"/><polygon points="299,1318 307,1318 302,1324 308,1324 296,1334 300,1326 294,1326" fill="#f5d27a"/><g stroke="#e8625c" stroke-width="3.2"><line x1="191" y1="1346" x2="203" y2="1358"/><line x1="203" y1="1346" x2="191" y2="1358"/></g><circle cx="217" cy="1362" r="3.8" fill="none" stroke="#dcdcdc" stroke-width="1.6"/><polyline points="213,1362 209,1362 198,1376" fill="none" stroke="#dcdcdc" stroke-width="1.6"/><polyline points="209,1362 220,1375" fill="none" stroke="#dcdcdc" stroke-width="1.6"/><polygon points="195,1378 197,1372 201,1375" fill="#dcdcdc"/><polygon points="222,1378 220,1372 216,1375" fill="#dcdcdc"/><circle cx="259" cy="1351" r="5.5" fill="none" stroke="#dcdcdc" stroke-width="1.8"/><circle cx="259" cy="1368" r="5.5" fill="none" stroke="#dcdcdc" stroke-width="1.8"/><polyline points="253.5,1355 247,1356 238,1372" fill="none" stroke="#dcdcdc" stroke-width="1.8"/><polygon points="234,1376 236,1368 241,1371" fill="#dcdcdc"/><rect x="22" y="1458" width="60" height="52" fill="none" stroke="#dcdcdc" stroke-width="2"/><g stroke="#dcdcdc" stroke-width="2"><line x1="22" y1="1475" x2="82" y2="1475"/><line x1="22" y1="1487" x2="82" y2="1487"/><line x1="22" y1="1499" x2="82" y2="1499"/><line x1="42" y1="1475" x2="42" y2="1510"/><line x1="63" y1="1475" x2="63" y2="1510"/></g><rect x="109" y="1453" width="54" height="53" fill="none" stroke="#dcdcdc" stroke-width="2"/><g stroke="#dcdcdc" stroke-width="2"><line x1="109" y1="1469" x2="163" y2="1469"/><line x1="109" y1="1481" x2="163" y2="1481"/><line x1="109" y1="1493" x2="163" y2="1493"/><line x1="127" y1="1469" x2="127" y2="1506"/><line x1="145" y1="1469" x2="145" y2="1506"/></g><g transform="translate(136,1486) scale(0.9)"><path d="M0,29 Q3,17 15,12 L21,17 Q16,28 0,29 Z" fill="#d2ad7a" stroke="#3b4353" stroke-width="1.5"/><polygon points="18,11 30,0 35,4.5 23,16" fill="#f2f2f2" stroke="#3b4353" stroke-width="1.5"/></g><rect x="190" y="1456" width="22" height="18" fill="#dcdcdc"/><rect x="193" y="1459" width="12" height="10" fill="#a9a9a9"/><polygon points="205,1450 212,1456 205,1456" fill="#f2f2f2"/><rect x="204" y="1464" width="18" height="14" fill="#f2f2f2" stroke="#3b4353" stroke-width="1.5"/><rect x="204.5" y="1464.5" width="17" height="3" fill="#b9b9b9"/><g fill="#3b4353"><rect x="207" y="1470" width="2" height="2"/><rect x="210.5" y="1470" width="8" height="2"/><rect x="207" y="1474" width="2" height="2"/><rect x="210.5" y="1474" width="8" height="2"/></g><path d="M191,1454 a3.5,4 0 1 1 7,0 M198,1454 Q191,1458 191,1462 a3.5,4 0 1 0 7,0" fill="none" stroke="#e8a878" stroke-width="2.2"/><rect x="234" y="1456" width="22" height="18" fill="#dcdcdc"/><rect x="237" y="1459" width="12" height="10" fill="#a9a9a9"/><line x1="260" y1="1462" x2="260" y2="1474" stroke="#6ab4f5" stroke-width="3"/><polygon points="254,1472 266,1472 260,1478" fill="#6ab4f5"/><path d="M235,1454 a3.5,4 0 1 1 7,0 M242,1454 Q235,1458 235,1462 a3.5,4 0 1 0 7,0" fill="none" stroke="#e8a878" stroke-width="2.2"/><rect x="190" y="1490" width="14" height="13" fill="#f2f2f2"/><g fill="#3f87e6"><rect x="193" y="1493" width="2" height="2"/><rect x="196" y="1493" width="6" height="2"/><rect x="193" y="1497" width="2" height="2"/><rect x="196" y="1497" width="6" height="2"/></g><text x="213" y="1501" text-anchor="middle" font-family="Liberation Sans" font-weight="bold" font-size="13" fill="#6ab4f5">A</text><rect x="198" y="1503" width="24" height="6" fill="#8cc4f5"/><rect x="198" y="1512" width="24" height="10" fill="#dcdcdc"/><rect x="234" y="1500" width="32" height="22" fill="#dcdcdc"/><g stroke="#a9a9a9" stroke-width="1.6" fill="none"><rect x="240" y="1503" width="18" height="14"/><line x1="240" y1="1510" x2="258" y2="1510"/><line x1="249" y1="1503" x2="249" y2="1517"/></g><path d="M251,1494 A6.5,6.5 0 0 1 263,1493" fill="none" stroke="#6cc470" stroke-width="2"/><path d="M263.5,1498 A6.5,6.5 0 0 1 251.5,1499" fill="none" stroke="#6cc470" stroke-width="2"/><path d="M235,1498 a3.5,4 0 1 1 7,0 M242,1498 Q235,1502 235,1506 a3.5,4 0 1 0 7,0" fill="none" stroke="#e8a878" stroke-width="2.2"/><line x1="23" y1="1596" x2="23" y2="1657" stroke="#e07070" stroke-width="2"/><rect x="19.5" y="1654" width="6.5" height="6.5" fill="#e07070"/><line x1="28" y1="1657" x2="84" y2="1657" stroke="#dcdcdc" stroke-width="2"/><polygon points="94,1670 86,1670 94,1662" fill="#a8a8a8"/><rect x="102" y="1603" width="13" height="10" fill="#dcdcdc"/><line x1="115" y1="1590" x2="115" y2="1614" stroke="#e07070" stroke-width="2"/><rect x="116" y="1590" width="12" height="10" fill="#8cc4f5"/><polygon points="125,1606 133,1606 128,1612 134,1612 122,1622 126,1614 120,1614" fill="#f5d27a"/><path d="M150,1590 H146 V1618 H150" fill="none" stroke="#f2f2f2" stroke-width="1.6"/><path d="M170,1590 H174 V1604" fill="none" stroke="#f2f2f2" stroke-width="1.6"/><line x1="152" y1="1602" x2="164" y2="1614" stroke="#e07070" stroke-width="1.8"/><line x1="159" y1="1608" x2="168" y2="1598" stroke="#dcdcdc" stroke-width="1.8"/><path d="M172,1606 A6,6 0 0 0 172,1618 Z" fill="#f5d27a"/><path d="M172,1606 A6,6 0 0 1 172,1618 Z" fill="#f5d27a"/><rect x="169" y="1617" width="6" height="4" fill="#f2f2f2"/><path d="M106,1634 H102 V1662 H106" fill="none" stroke="#f2f2f2" stroke-width="1.6"/><path d="M126,1634 H130 V1648" fill="none" stroke="#f2f2f2" stroke-width="1.6"/><line x1="108" y1="1646" x2="120" y2="1658" stroke="#e07070" stroke-width="1.8"/><line x1="115" y1="1652" x2="124" y2="1642" stroke="#dcdcdc" stroke-width="1.8"/><path d="M128,1649 A6,6 0 0 0 128,1661 Z" fill="#f5d27a"/><path d="M128,1649 A6,6 0 0 1 128,1661 Z" fill="#7fd0d8"/><rect x="125" y="1660" width="6" height="4" fill="#f2f2f2"/><path d="M150,1634 H146 V1662 H150" fill="none" stroke="#f2f2f2" stroke-width="1.6"/><path d="M170,1634 H174 V1648" fill="none" stroke="#f2f2f2" stroke-width="1.6"/><line x1="152" y1="1646" x2="164" y2="1658" stroke="#e07070" stroke-width="1.8"/><line x1="159" y1="1652" x2="168" y2="1642" stroke="#dcdcdc" stroke-width="1.8"/><path d="M172,1649 A6,6 0 0 0 172,1661 Z" fill="#7fd0d8"/><path d="M172,1649 A6,6 0 0 1 172,1661 Z" fill="#7fd0d8"/><rect x="169" y="1660" width="6" height="4" fill="#f2f2f2"/><g stroke="#dcdcdc" stroke-width="2"><line x1="196.5" y1="1596" x2="196.5" y2="1660"/><line x1="259" y1="1596" x2="259" y2="1660"/></g><line x1="204.5" y1="1609" x2="251" y2="1609" stroke="#dcdcdc" stroke-width="2"/><polygon points="198.5,1609 205.5,1604.8 205.5,1613.2" fill="#dcdcdc"/><polygon points="257,1609 250,1604.8 250,1613.2" fill="#dcdcdc"/><path d="M220,1637 V1631 a8,8 0 0 1 16,0 V1637" fill="none" stroke="#f5d27a" stroke-width="3.2"/><rect x="214.5" y="1636" width="27" height="20" fill="#f5d27a"/><rect x="227" y="1642" width="2" height="6" fill="#6b5a3a"/><polygon points="270,1670 262,1670 270,1662" fill="#a8a8a8"/><g stroke="#dcdcdc" stroke-width="1.8"><line x1="278.5" y1="1590" x2="278.5" y2="1622"/><line x1="309.5" y1="1590" x2="309.5" y2="1622"/></g><line x1="284.5" y1="1597" x2="303.5" y2="1597" stroke="#dcdcdc" stroke-width="1.6"/><polygon points="280.5,1597 285.5,1594.2 285.5,1599.8" fill="#dcdcdc"/><polygon points="307.5,1597 302.5,1594.2 302.5,1599.8" fill="#dcdcdc"/><path d="M293,1605 A6,6 0 0 0 293,1617" fill="none" stroke="#6ab4f5" stroke-width="2"/><path d="M295,1605 A6,6 0 0 1 295,1617" fill="none" stroke="#e8625c" stroke-width="2"/><g stroke="#dcdcdc" stroke-width="1.8"><line x1="322.5" y1="1590" x2="322.5" y2="1622"/><line x1="349" y1="1590" x2="349" y2="1600"/></g><line x1="328.5" y1="1597" x2="343" y2="1597" stroke="#dcdcdc" stroke-width="1.6"/><polygon points="324.5,1597 329.5,1594.2 329.5,1599.8" fill="#dcdcdc"/><polygon points="347,1597 342,1594.2 342,1599.8" fill="#dcdcdc"/><path d="M348,1606 A6,6 0 0 0 348,1618 Z" fill="#f5d27a"/><path d="M348,1606 A6,6 0 0 1 348,1618 Z" fill="#f5d27a"/><rect x="345" y="1617" width="6" height="4" fill="#f2f2f2"/><g stroke="#dcdcdc" stroke-width="1.8"><line x1="278.5" y1="1634" x2="278.5" y2="1666"/><line x1="305" y1="1634" x2="305" y2="1644"/></g><line x1="284.5" y1="1641" x2="299" y2="1641" stroke="#dcdcdc" stroke-width="1.6"/><polygon points="280.5,1641 285.5,1638.2 285.5,1643.8" fill="#dcdcdc"/><polygon points="303,1641 298,1638.2 298,1643.8" fill="#dcdcdc"/><path d="M304,1649 A6,6 0 0 0 304,1661 Z" fill="#f5d27a"/><path d="M304,1649 A6,6 0 0 1 304,1661 Z" fill="#7fd0d8"/><rect x="301" y="1660" width="6" height="4" fill="#f2f2f2"/><g stroke="#dcdcdc" stroke-width="1.8"><line x1="322.5" y1="1634" x2="322.5" y2="1666"/><line x1="349" y1="1634" x2="349" y2="1644"/></g><line x1="328.5" y1="1641" x2="343" y2="1641" stroke="#dcdcdc" stroke-width="1.6"/><polygon points="324.5,1641 329.5,1638.2 329.5,1643.8" fill="#dcdcdc"/><polygon points="347,1641 342,1638.2 342,1643.8" fill="#dcdcdc"/><path d="M348,1649 A6,6 0 0 0 348,1661 Z" fill="#7fd0d8"/><path d="M348,1649 A6,6 0 0 1 348,1661 Z" fill="#7fd0d8"/><rect x="345" y="1660" width="6" height="4" fill="#f2f2f2"/></svg>
<svg style="left:388px;top:109px" width="32" height="24" viewBox="0 0 32 24"><polygon points="0,0 23,0 32,9 32,24 0,24" fill="#dcdcdc"/><polygon points="25,0 32,7 25,7" fill="#3b4353" opacity="0"/><polygon points="23,0 32,9 23,9" fill="#f2f2f2" stroke="#3b4353" stroke-width="1.5"/></svg>
<svg style="left:453.5px;top:109px" width="33" height="24" viewBox="0 0 33 24"><polygon points="0,0 11,0 14,3.5 25,3.5 25,7 8,7 0,23" fill="#dcdcdc"/><polygon points="8.5,7.5 33,7.5 26,24 0.5,24" fill="#dcdcdc" stroke="#3b4353" stroke-width="1.6"/></svg>
<svg style="left:521px;top:106px" width="30" height="30" viewBox="0 0 30 30"><path d="M0,0 H30 V29 H2 L0,27 Z" fill="#b9b9b9"/><rect x="7" y="0" width="16" height="10" fill="#f2f2f2" stroke="#3b4353" stroke-width="1.5"/><rect x="6" y="18.5" width="18" height="11" fill="#f2f2f2" stroke="#3b4353" stroke-width="1.5"/><rect x="9" y="22" width="2.5" height="5" fill="#2c313b"/></svg>
<svg style="left:586px;top:105px" width="33" height="31" viewBox="0 0 33 31"><path d="M0,0 H30 V29 H2 L0,27 Z" fill="#b9b9b9"/><rect x="7" y="0" width="16" height="10" fill="#f2f2f2" stroke="#3b4353" stroke-width="1.5"/><rect x="6" y="18.5" width="18" height="11" fill="#f2f2f2" stroke="#3b4353" stroke-width="1.5"/><rect x="9" y="22" width="2.5" height="5" fill="#2c313b"/><g transform="translate(15,14) scale(1.1)"><polygon points="0,16 2,10 10,2 14,6 6,14" fill="#f5d27a" stroke="#3b4353" stroke-width="1"/><polygon points="0,16 2,10 6,14" fill="#cfcfcf"/><path d="M10,2 L12,0 Q14,-1 16,1 Q17,3 16,4 L14,6 Z" fill="#e8625c"/></g></svg>
<svg style="left:714px;top:111.5px" width="32" height="18.5" viewBox="0 0 32 18.5"><path d="M0,9 L11,0 V5 Q28,5 32,18.5 Q26,12 11,13 V18 Z" fill="#dcdcdc"/></svg>
<svg style="left:779.5px;top:111.5px" width="32" height="18.5" viewBox="0 0 32 18.5"><path d="M32,9 L21,0 V5 Q4,5 0,18.5 Q6,12 21,13 V18 Z" fill="#dcdcdc"/></svg>
<svg style="left:908px;top:104.7px" width="32" height="32" viewBox="0 0 32 32"><rect x="7" y="0" width="18" height="7" fill="#f2f2f2"/><rect x="0" y="7" width="32" height="14" fill="#dcdcdc"/><rect x="0" y="17" width="32" height="5" fill="#b9b9b9"/><rect x="6" y="20" width="20" height="12" fill="#f2f2f2"/><rect x="8" y="22" width="16" height="8" fill="#8cc4f5"/></svg>
<svg style="left:974px;top:104.7px" width="32" height="32" viewBox="0 0 32 32"><rect x="7" y="0" width="18" height="7" fill="#f2f2f2"/><rect x="0" y="7" width="32" height="14" fill="#dcdcdc"/><rect x="0" y="17" width="32" height="5" fill="#b9b9b9"/><rect x="6" y="20" width="10" height="11" fill="#f2f2f2"/><polygon points="14,21 24,21 24,17 32,25 24,33 24,29 14,29" fill="#6ab4f5" stroke="#3b4353" stroke-width="1.2"/></svg>
<svg style="left:1041px;top:104.7px" width="31" height="32" viewBox="0 0 31 32"><polygon points="0,0 18,0 26,8 26,32 0,32" fill="#dcdcdc"/><polygon points="20,0 26,6 20,6" fill="#3b4353" opacity="0"/><polygon points="18,0 26,8 18,8" fill="#f2f2f2" stroke="#3b4353" stroke-width="1.5"/><g fill="#b9b9b9"><rect x="5" y="0" width="2" height="32"/><rect x="16" y="0" width="2" height="32"/><rect x="0" y="8" width="26" height="2"/><rect x="0" y="22" width="26" height="2"/></g><rect x="11" y="15" width="20" height="17" fill="#f2f2f2" stroke="#3b4353" stroke-width="1.5"/><rect x="11.5" y="15.5" width="19" height="3.5" fill="#b9b9b9"/><g fill="#3b4353"><rect x="14" y="22" width="2.5" height="2.5"/><rect x="18" y="22" width="9" height="2.5"/><rect x="14" y="27" width="2.5" height="2.5"/><rect x="18" y="27" width="9" height="2.5"/></g></svg>
<svg style="left:1107px;top:104.7px" width="32" height="32" viewBox="0 0 32 32"><polygon points="0,0 18,0 26,8 26,32 0,32" fill="#dcdcdc"/><polygon points="20,0 26,6 20,6" fill="#3b4353" opacity="0"/><polygon points="18,0 26,8 18,8" fill="#f2f2f2" stroke="#3b4353" stroke-width="1.5"/><g fill="#b9b9b9"><rect x="5" y="0" width="2" height="32"/><rect x="16" y="0" width="2" height="32"/><rect x="0" y="8" width="26" height="2"/><rect x="0" y="22" width="26" height="2"/></g><g transform="translate(15,15) scale(1.1)"><polygon points="0,16 2,10 10,2 14,6 6,14" fill="#f5d27a" stroke="#3b4353" stroke-width="1"/><polygon points="0,16 2,10 6,14" fill="#cfcfcf"/><path d="M10,2 L12,0 Q14,-1 16,1 Q17,3 16,4 L14,6 Z" fill="#e8625c"/></g></svg>
<svg style="left:1233.6px;top:104px" width="33" height="32" viewBox="0 0 33 32"><polygon points="7,0 25,0 33,8 33,32 7,32" fill="#dcdcdc"/><polygon points="27,0 33,6 27,6" fill="#3b4353" opacity="0"/><polygon points="25,0 33,8 25,8" fill="#f2f2f2" stroke="#3b4353" stroke-width="1.5"/><polygon points="0,12 12,12 12,7 21,15.5 12,24 12,19 0,19" fill="#6ab4f5" stroke="#3b4353" stroke-width="1.2"/></svg>
<svg style="left:1300px;top:104px" width="32" height="32" viewBox="0 0 32 32"><polygon points="0,0 18,0 26,8 26,32 0,32" fill="#dcdcdc"/><polygon points="20,0 26,6 20,6" fill="#3b4353" opacity="0"/><polygon points="18,0 26,8 18,8" fill="#f2f2f2" stroke="#3b4353" stroke-width="1.5"/><polygon points="13,15 23,15 23,10 32,18.5 23,27 23,22 13,22" fill="#6ab4f5" stroke="#3b4353" stroke-width="1.2"/></svg>
<svg style="left:1366px;top:104px" width="32" height="32" viewBox="0 0 32 32"><polygon points="0,9 24,9 32,17 32,32 0,32" fill="#dcdcdc"/><polygon points="26,9 32,15 26,15" fill="#3b4353" opacity="0"/><polygon points="24,9 32,17 24,17" fill="#f2f2f2" stroke="#3b4353" stroke-width="1.5"/><path d="M5,18 V5 a3.5,3.5 0 0 1 7,0 V14 a1.8,1.8 0 0 1 -3.6,0 V6" fill="none" stroke="#6ab4f5" stroke-width="2"/></svg>
<svg style="left:1432px;top:104px" width="32" height="32" viewBox="0 0 32 32"><g transform="translate(0,7) scale(0.85,0.85)"><path d="M0,0 H30 V29 H2 L0,27 Z" fill="#b9b9b9"/><rect x="7" y="0" width="16" height="10" fill="#f2f2f2" stroke="#3b4353" stroke-width="1.5"/><rect x="6" y="18.5" width="18" height="11" fill="#f2f2f2" stroke="#3b4353" stroke-width="1.5"/><rect x="9" y="22" width="2.5" height="5" fill="#2c313b"/></g><circle cx="23" cy="9" r="9" fill="#6ab4f5" stroke="#3b4353" stroke-width="1.5"/><g stroke="#3b4353" stroke-width="1.3" fill="none"><ellipse cx="23" cy="9" rx="4" ry="8"/><line x1="14.5" y1="9" x2="31.5" y2="9"/><line x1="16" y1="4.5" x2="30" y2="4.5"/><line x1="16" y1="13.5" x2="30" y2="13.5"/></g></svg>
<svg style="left:1560px;top:105px" width="32" height="32" viewBox="0 0 32 32"><rect x="1" y="1" width="26" height="26" fill="none" stroke="#dcdcdc" stroke-width="2"/><circle cx="23" cy="23" r="5.5" fill="#3b4353" stroke="#f2f2f2" stroke-width="2.2"/><line x1="26.5" y1="27" x2="31" y2="31.5" stroke="#c9904f" stroke-width="2.5"/></svg>
<svg style="left:1625px;top:104.5px" width="33" height="32" viewBox="0 0 33 32"><path d="M9,31 Q4,26 1,19 Q0,16 3,16 Q5,16 8,20 V5 Q8,2.5 10.5,2.5 Q13,2.5 13,5 V14 V2.5 Q13,0 15.5,0 Q18,0 18,2.5 V14 V3.5 Q18,1 20.5,1 Q23,1 23,3.5 V15 V7 Q23,4.5 25.5,4.5 Q28,4.5 28,7 V20 Q28,27 24,31 Z" fill="#dcdcdc"/></svg>
<svg style="left:1692px;top:104px" width="32" height="32" viewBox="0 0 32 32"><ellipse cx="16" cy="17" rx="14.5" ry="6.5" fill="none" stroke="#f2f2f2" stroke-width="2.2"/><rect x="12" y="8" width="8" height="4" fill="#3b4353"/><polygon points="15,6 21,10 15,13" fill="#f2f2f2"/><line x1="16" y1="0" x2="16" y2="32" stroke="#6ab4f5" stroke-width="2"/></svg>
<svg style="left:1822px;top:105px" width="31" height="31" viewBox="0 0 31 31"><rect x="0" y="0" width="22" height="27" fill="#dcdcdc"/><rect x="3" y="3" width="14" height="6" fill="#8cc4f5"/><g fill="#5b6270"><rect x="3" y="12" width="12" height="1.6"/><rect x="3" y="16" width="8" height="1.6"/><rect x="3" y="20" width="10" height="1.6"/></g><g transform="translate(13,14) rotate(45 9 9)"><rect x="6" y="0" width="6" height="8" fill="#f2f2f2" stroke="#3b4353" stroke-width="1"/><rect x="3" y="8" width="12" height="10" fill="#f5d27a" stroke="#3b4353" stroke-width="1"/></g></svg>
<svg style="left:1886px;top:104px" width="32" height="32" viewBox="0 0 32 32"><polygon points="12,0 19,0 15,6 19,6 10,14 13,8 9,8" fill="#f5d27a"/><rect x="15" y="15" width="17" height="17" fill="#f2f2f2"/><g fill="#3f87e6"><rect x="18" y="18" width="2" height="2"/><rect x="22" y="18" width="7" height="2"/><rect x="18" y="22.5" width="2" height="2"/><rect x="22" y="22.5" width="7" height="2"/><rect x="18" y="27" width="2" height="2"/><rect x="22" y="27" width="7" height="2"/></g><polygon points="1,12 1,31 6,26 10,33 13,31 9,24 16,24" fill="#f2f2f2" stroke="#3b4353" stroke-width="1.3"/></svg>
<svg style="left:1952px;top:104px" width="33" height="33" viewBox="0 0 33 33"><rect x="0" y="0" width="16" height="20" fill="#dcdcdc"/><circle cx="22" cy="11" r="9" fill="#6cc470" stroke="#3b4353" stroke-width="1.2"/><circle cx="11" cy="23" r="9" fill="#6cc470" stroke="#3b4353" stroke-width="1.2"/><g stroke="#f2f2f2" stroke-width="2.2"><line x1="21" y1="12" x2="21" y2="33"/><line x1="11" y1="22.5" x2="33" y2="22.5"/></g><rect x="17" y="18.5" width="8" height="8" fill="none" stroke="#f2f2f2" stroke-width="1.5"/></svg>
<svg style="left:2017px;top:104.5px" width="33" height="32" viewBox="0 0 33 32"><circle cx="8" cy="8" r="7" fill="#6cc470"/><circle cx="25" cy="25" r="7.5" fill="#8cc4f5"/><path d="M17,7 H24 V14" fill="none" stroke="#f2f2f2" stroke-width="2"/><polygon points="20,13 28,13 24,18" fill="#f2f2f2"/></svg>
<svg style="left:2086px;top:104.5px" width="28" height="32" viewBox="0 0 28 32"><polygon points="0,0 18,0 26,8 26,32 0,32" fill="#dcdcdc"/><polygon points="20,0 26,6 20,6" fill="#3b4353" opacity="0"/><polygon points="18,0 26,8 18,8" fill="#f2f2f2" stroke="#3b4353" stroke-width="1.5"/><g><rect x="11" y="5" width="4" height="14" fill="#b9b9b9"/><polygon points="9,19 17,19 21,31 5,31" fill="#f5d27a"/><rect x="9" y="17" width="8" height="3" fill="#6b5a3a"/></g></svg>
<svg style="left:2150px;top:104px" width="33" height="33" viewBox="0 0 33 33"><circle cx="10" cy="20" r="9" fill="none" stroke="#b9b9b9" stroke-width="2.2"/><rect x="11" y="18" width="16" height="14" fill="none" stroke="#b9b9b9" stroke-width="2.2"/><g stroke="#6ab4f5" stroke-width="2"><line x1="20" y1="0" x2="18" y2="15"/><line x1="27" y1="0" x2="25" y2="15"/><line x1="15" y1="4.5" x2="32" y2="4.5"/><line x1="14" y1="10.5" x2="31" y2="10.5"/></g></svg>
<svg style="left:2277.5px;top:104px" width="33" height="32" viewBox="0 0 33 32"><polygon points="0,4 9,4 14,9 14,31 0,31" fill="#dcdcdc"/><polygon points="11,4 14,7 11,7" fill="#3b4353" opacity="0"/><polygon points="9,4 14,9 9,9" fill="#f2f2f2" stroke="#3b4353" stroke-width="1.5"/><polygon points="19,4 28,4 33,9 33,31 19,31" fill="#dcdcdc"/><polygon points="30,4 33,7 30,7" fill="#3b4353" opacity="0"/><polygon points="28,4 33,9 28,9" fill="#f2f2f2" stroke="#3b4353" stroke-width="1.5"/><rect x="15" y="0" width="3" height="32" fill="#6ab4f5"/><g fill="none" stroke-width="1.6"><rect x="4" y="11" width="5" height="5" stroke="#e8625c"/><rect x="4" y="20" width="5" height="3" stroke="#6cc470"/><rect x="24" y="13" width="5" height="4" stroke="#6b7280"/><rect x="24" y="21" width="5" height="4" stroke="#6b7280"/></g></svg>
<svg style="left:2344px;top:106.5px" width="32" height="28" viewBox="0 0 32 28"><polygon points="0,13 32,0 26,27 15,20 12,27 12,18 27,4 10,16" fill="#6ab4f5"/></svg>
<svg style="left:2410px;top:106px" width="33" height="30" viewBox="0 0 33 30"><rect x="7" y="7" width="26" height="22" fill="#dcdcdc"/><rect x="0" y="0" width="26" height="21" fill="#4b5566" stroke="#6ab4f5" stroke-width="2"/><path d="M3,12 Q7,4 9,12 Q12,16 14,11 Q17,8 23,12" fill="none" stroke="#6ab4f5" stroke-width="1.2"/></svg>
<svg style="left:2475.5px;top:100px" width="49" height="37" viewBox="0 0 49 37"><path d="M3,12 Q0,8 4,5 Q6,1 11,3 Q15,0 18,3 Q23,3 22,8 Q24,12 20,14 H6 Q3,14 3,12 Z" fill="none" stroke="#dcdcdc" stroke-width="1.8"/><rect x="8" y="15" width="24" height="19" fill="none" stroke="#6ab4f5" stroke-width="2.2"/><rect x="6" y="14" width="16" height="4" fill="#3b4353"/><path d="M22,12 H26 V26" fill="none" stroke="#f2f2f2" stroke-width="2"/><polygon points="22,24 30,24 26,29" fill="#f2f2f2"/><circle cx="39" cy="10" r="9.5" fill="#e8773a" stroke="#f2f2f2" stroke-width="1.8"/></svg>
<svg style="left:2604.5px;top:100px" width="48" height="37" viewBox="0 0 48 37"><rect x="1" y="8" width="22" height="28" fill="#dcdcdc"/><rect x="7" y="5" width="10" height="5" fill="#dcdcdc" stroke="#3b4353" stroke-width="1.3"/><g fill="#6ab4f5"><rect x="4" y="15" width="2" height="2"/><rect x="8" y="15" width="10" height="2"/><rect x="4" y="20" width="2" height="2"/><rect x="8" y="20" width="10" height="2"/><rect x="4" y="25" width="2" height="2"/><rect x="8" y="25" width="6" height="2"/></g><polygon points="19,19 28,19 24,26 29,26 17,37 21,29 16,29" fill="#f5d27a" stroke="#3b4353" stroke-width="1"/><circle cx="38" cy="10" r="9.5" fill="#e8773a" stroke="#f2f2f2" stroke-width="1.8"/></svg>
<svg style="left:0;top:0" width="3024" height="1964" viewBox="0 0 3024 1964"><rect x="10" y="164.2" width="14" height="13.4" fill="#8cc8fa"/><rect x="26" y="166.2" width="11.8" height="11.4" fill="#dcdcdc"/><rect x="12" y="180.2" width="11.9" height="11.8" fill="#dcdcdc"/><rect x="26" y="180.2" width="11.8" height="11.8" fill="#dcdcdc"/><g stroke="#d8d8d8" stroke-width="1.8"><line x1="72" y1="167.2" x2="72" y2="189.4"/><line x1="60.8" y1="178.3" x2="83.2" y2="178.3"/></g><polyline points="344,219 338.5,224 344,229" fill="none" stroke="#c4c4c4" stroke-width="1.6"/><polyline points="351,219 345.5,224 351,229" fill="none" stroke="#c4c4c4" stroke-width="1.6"/><polygon points="2525.7,225.5 2540.7,225.5 2529.7,235.5 2514.7,235.5" fill="#dcdcdc" stroke="#3b4353" stroke-width="1.5"/><polygon points="2525.7,218.5 2540.7,218.5 2529.7,228.5 2514.7,228.5" fill="#dcdcdc" stroke="#3b4353" stroke-width="1.5"/><polygon points="2525.7,211.5 2540.7,211.5 2529.7,221.5 2514.7,221.5" fill="#dcdcdc" stroke="#3b4353" stroke-width="1.5"/><circle cx="2539.5" cy="232.8" r="8.3" fill="#3b4353"/><circle cx="2539.5" cy="232.8" r="7" fill="#f2f2f2"/><rect x="2538.3" y="231" width="2.6" height="6.5" fill="#3b4353"/><circle cx="2539.6" cy="228.3" r="1.4" fill="#3b4353"/><polygon points="2620,217 2643,217 2651,225 2651,236 2620,236" fill="#dcdcdc"/><polygon points="2643,217 2651,225 2643,225" fill="#f2f2f2" stroke="#2d333d" stroke-width="1.3"/><rect x="2619" y="207" width="10" height="20" fill="#2d333d"/><path d="M2622,224 V212 a3.5,3.5 0 0 1 7,0 V222 a2,2 0 0 1 -4,0 V213" fill="none" stroke="#f2f2f2" stroke-width="1.9"/><rect x="2727" y="210.8" width="27" height="26" fill="#dcdcdc"/><rect x="2727" y="210.8" width="27" height="5" fill="#a9a9a9"/><rect x="2729" y="212" width="4" height="2" fill="#2d333d"/><g fill="#2d333d"><rect x="2730" y="219" width="5" height="4.5"/></g><g fill="#8b8f96"><rect x="2738" y="219" width="5" height="4.5"/><rect x="2746" y="219" width="5" height="4.5"/><rect x="2738" y="226" width="5" height="4.5"/><rect x="2746" y="226" width="5" height="4.5"/></g><rect x="2730" y="226" width="5" height="4.5" fill="#2d333d"/><rect x="2730" y="233" width="21" height="1.5" fill="#8b8f96"/><polyline points="2994,219.5 2999,224 2994,228.7" fill="none" stroke="#b8bcc2" stroke-width="1.5"/><polyline points="3002,219.5 3007,224 3002,228.7" fill="none" stroke="#b8bcc2" stroke-width="1.5"/><rect x="2980.4" y="249.4" width="17.5" height="25" fill="none" stroke="#dcdcdc" stroke-width="1.8"/><line x1="2990.4" y1="249.4" x2="2990.4" y2="274.4" stroke="#dcdcdc" stroke-width="1.8"/><line x1="2975.4" y1="261.9" x2="2987.4" y2="261.9" stroke="#6ab4f5" stroke-width="2"/><polygon points="2972.4,261.9 2977.4,257.9 2977.4,265.9" fill="#6ab4f5"/><rect x="2982" y="1060.5" width="17.5" height="25" fill="none" stroke="#dcdcdc" stroke-width="1.8"/><line x1="2992" y1="1060.5" x2="2992" y2="1085.5" stroke="#dcdcdc" stroke-width="1.8"/><line x1="2977" y1="1073" x2="2989" y2="1073" stroke="#6ab4f5" stroke-width="2"/><polygon points="2974,1073 2979,1069 2979,1077" fill="#6ab4f5"/><polygon points="2556.0,332.6 2574.5,332.6 2561.5,344.6 2543.0,344.6" fill="#dcdcdc" stroke="#3b4353" stroke-width="1.6" stroke-linejoin="round"/><polygon points="2556.0,326.3 2574.5,326.3 2561.5,338.3 2543.0,338.3" fill="#dcdcdc" stroke="#3b4353" stroke-width="1.6" stroke-linejoin="round"/><polygon points="2556.0,320.0 2574.5,320.0 2561.5,332.0 2543.0,332.0" fill="#8cc4f5" stroke="#3b4353" stroke-width="1.6" stroke-linejoin="round"/><circle cx="2559" cy="320.5" r="6.6" fill="#dcdcdc" stroke="#3b4353" stroke-width="1.4"/><polygon points="2602.0,325.0 2617.0,325.0 2606.0,335.5 2591.0,335.5" fill="#dcdcdc" stroke="#3b4353" stroke-width="1.6" stroke-linejoin="round"/><polygon points="2602.0,319.0 2617.0,319.0 2606.0,329.5 2591.0,329.5" fill="#dcdcdc" stroke="#3b4353" stroke-width="1.6" stroke-linejoin="round"/><polygon points="2602.0,313.0 2617.0,313.0 2606.0,323.5 2591.0,323.5" fill="#dcdcdc" stroke="#3b4353" stroke-width="1.6" stroke-linejoin="round"/><g transform="translate(2614,334) rotate(-40)"><rect x="-4" y="-10" width="8" height="7" fill="#f2f2f2" stroke="#3b4353" stroke-width="1.2"/><rect x="-1.8" y="-14" width="3.6" height="5" fill="#f2f2f2"/><rect x="-6.5" y="-3" width="13" height="12" fill="#f5d27a" stroke="#3b4353" stroke-width="1.2"/></g><polygon points="2653.0,333.6 2670.0,333.6 2659.0,344.1 2642.0,344.1" fill="#dcdcdc" stroke="#3b4353" stroke-width="1.6" stroke-linejoin="round"/><polygon points="2653.0,327.3 2670.0,327.3 2659.0,337.8 2642.0,337.8" fill="#dcdcdc" stroke="#3b4353" stroke-width="1.6" stroke-linejoin="round"/><polygon points="2653.0,321.0 2670.0,321.0 2659.0,331.5 2642.0,331.5" fill="#dcdcdc" stroke="#3b4353" stroke-width="1.6" stroke-linejoin="round"/><path d="M2648,318 Q2661,310 2665,323" fill="none" stroke="#6ab4f5" stroke-width="3.2"/><polygon points="2640,318 2650,311.5 2650,324.5" fill="#6ab4f5"/><polygon points="2701.0,325.9 2717.0,325.9 2706.0,336.4 2690.0,336.4" fill="#8cc4f5" stroke="#3b4353" stroke-width="1.6" stroke-linejoin="round"/><polygon points="2701.0,319.9 2717.0,319.9 2706.0,330.4 2690.0,330.4" fill="#dcdcdc" stroke="#3b4353" stroke-width="1.6" stroke-linejoin="round"/><polygon points="2701.0,313.9 2717.0,313.9 2706.0,324.4 2690.0,324.4" fill="#dcdcdc" stroke="#3b4353" stroke-width="1.6" stroke-linejoin="round"/><line x1="2716" y1="332" x2="2706" y2="341" stroke="#f2f2f2" stroke-width="2.2"/><polygon points="2703,344.5 2704.5,335 2712,342" fill="#f2f2f2"/><polygon points="2748.0,325.9 2764.0,325.9 2753.0,336.4 2737.0,336.4" fill="#8cc4f5" stroke="#3b4353" stroke-width="1.6" stroke-linejoin="round"/><polygon points="2748.0,319.9 2764.0,319.9 2753.0,330.4 2737.0,330.4" fill="#dcdcdc" stroke="#3b4353" stroke-width="1.6" stroke-linejoin="round"/><polygon points="2748.0,313.9 2764.0,313.9 2753.0,324.4 2737.0,324.4" fill="#dcdcdc" stroke="#3b4353" stroke-width="1.6" stroke-linejoin="round"/><line x1="2752" y1="344" x2="2762" y2="335" stroke="#f2f2f2" stroke-width="2.2"/><polygon points="2765.5,331 2764,341 2756.5,334" fill="#f2f2f2"/><polygon points="2797.0,314.8 2810.6,314.8 2796.6,326.8 2783.0,326.8" fill="#dcdcdc"/><circle cx="2805.6" cy="333.8" r="10" fill="#3b4353"/><g stroke="#7fd8e4" stroke-width="2"><line x1="2805.6" y1="325.3" x2="2805.6" y2="342.3"/><line x1="2798.2" y1="329.6" x2="2813.0" y2="338.1"/><line x1="2813.0" y1="329.6" x2="2798.2" y2="338.1"/></g><circle cx="2805.6" cy="333.8" r="3.825" fill="none" stroke="#7fd8e4" stroke-width="2"/><polygon points="2846.0,314.8 2859.6,314.8 2845.6,326.8 2832.0,326.8" fill="#dcdcdc"/><circle cx="2855.5" cy="330.5" r="7.5" fill="#3b4353"/><circle cx="2855.5" cy="330.5" r="6" fill="#7fd8e4"/><rect x="2852.5" y="336" width="6" height="5" fill="#f2f2f2"/><polygon points="2894.0,314.8 2907.6,314.8 2893.6,326.8 2880.0,326.8" fill="#dcdcdc"/><rect x="2895" y="322" width="17" height="21" fill="#3b4353"/><path d="M2900,331 V328 a3.8,3.8 0 0 1 7.6,0 V331" fill="none" stroke="#7fd8e4" stroke-width="2.2" /><rect x="2897.5" y="331" width="12.5" height="11" fill="#7fd8e4"/><rect x="2903" y="334" width="1.5" height="4" fill="#2d3440"/><polygon points="2942.0,314.8 2955.6,314.8 2941.6,326.8 2928.0,326.8" fill="#dcdcdc"/><rect x="2939" y="322" width="21" height="21" fill="#3b4353"/><path d="M2950,331 V327 a3.8,3.8 0 0 1 7.6,0 V329" fill="none" stroke="#f5d27a" stroke-width="2.2" /><rect x="2941" y="331" width="12.5" height="11" fill="#f5d27a"/><rect x="2946.5" y="334" width="1.5" height="4" fill="#2d3440"/><polygon points="2524,960 2540,960 2532,967 2516,967" fill="none" stroke="#b9b9b9" stroke-width="1.6"/><path d="M2516,974 L2530,974 L2538,967" fill="none" stroke="#b9b9b9" stroke-width="1.6"/><path d="M2516,982 L2530,982 L2538,975" fill="none" stroke="#b9b9b9" stroke-width="1.6"/><polygon points="2582,959.5 2596,959.5 2588,965.5 2574,965.5" fill="none" stroke="#b9b9b9" stroke-width="1.6"/><path d="M2574,971 L2590,971" fill="none" stroke="#b9b9b9" stroke-width="1.6"/><path d="M2574,978 L2584,978" fill="none" stroke="#b9b9b9" stroke-width="1.6"/><rect x="2585.5" y="972.5" width="16.5" height="14" fill="#f2f2f2" stroke="#3b4353" stroke-width="1.4"/><rect x="2586" y="973" width="15.5" height="2.5" fill="#b9b9b9"/><g fill="#3b4353"><rect x="2588" y="978" width="2" height="2"/><rect x="2591.5" y="978" width="8" height="2"/><rect x="2588" y="982" width="2" height="2"/><rect x="2591.5" y="982" width="8" height="2"/></g><polygon points="2635,962 2643,962 2646,965 2654,965 2654,968 2641,968 2635,981" fill="#dcdcdc"/><polygon points="2641,969 2661,969 2656,982 2635,982" fill="#dcdcdc"/><polygon points="2695,962 2703,962 2706,965 2714,965 2714,968 2701,968 2695,981" fill="#dcdcdc"/><polygon points="2701,969 2721,969 2716,982 2695,982" fill="#dcdcdc"/><polygon points="2707,971 2712,971 2709,975 2713,975 2705,981 2708,976 2704,976" fill="#3b4353"/><rect x="2906" y="970.5" width="16" height="3.5" fill="#7d838c"/><rect x="2957" y="965" width="19" height="16" fill="none" stroke="#dcdcdc" stroke-width="1.8"/><line x1="2963.5" y1="965" x2="2963.5" y2="981" stroke="#dcdcdc" stroke-width="1.6"/><line x1="2969.5" y1="965" x2="2969.5" y2="981" stroke="#dcdcdc" stroke-width="1.6"/><polygon points="2982,971 2991,971 2986.5,976" fill="#dcdcdc"/><rect x="2932" y="1060" width="20" height="22" fill="none" stroke="#8a9099" stroke-width="1.6"/><g fill="#8a9099"><rect x="2935" y="1065" width="13" height="1.6"/><rect x="2935" y="1069" width="13" height="1.6"/><rect x="2935" y="1073" width="9" height="1.6"/></g><g transform="translate(2945,1087) rotate(-45)"><rect x="0" y="-3.5" width="18" height="7" fill="#8a9099" stroke="#3b4353" stroke-width="1.2"/><polygon points="0,-3.5 -5,0 0,3.5" fill="#8a9099"/></g><g stroke="#dcdcdc" stroke-width="2"><line x1="2357.8" y1="1925" x2="2357.8" y2="1955"/><line x1="2366" y1="1925" x2="2366" y2="1955"/><line x1="2374.2" y1="1925" x2="2374.2" y2="1955"/><line x1="2351" y1="1931.9" x2="2381" y2="1931.9"/><line x1="2351" y1="1940" x2="2381" y2="1940"/><line x1="2351" y1="1948.1" x2="2381" y2="1948.1"/></g><g fill="#dcdcdc"><rect x="2398" y="1928" width="4" height="4"/><rect x="2398" y="1938" width="4" height="4"/><rect x="2398" y="1948" width="4" height="4"/><rect x="2408" y="1928" width="4" height="4"/><rect x="2408" y="1938" width="4" height="4"/><rect x="2408" y="1948" width="4" height="4"/><rect x="2418" y="1928" width="4" height="4"/><rect x="2418" y="1938" width="4" height="4"/><rect x="2418" y="1948" width="4" height="4"/></g><polyline points="2439,1924.3 2439,1955.5 2470,1955.5" fill="none" stroke="#dcdcdc" stroke-width="1.8"/><rect x="2439" y="1946" width="9.5" height="9.5" fill="none" stroke="#dcdcdc" stroke-width="1.8"/><circle cx="2495" cy="1941" r="12.8" fill="none" stroke="#dcdcdc" stroke-width="1.8"/><line x1="2495" y1="1941" x2="2509" y2="1927" stroke="#dcdcdc" stroke-width="1.8"/><line x1="2495" y1="1941" x2="2514" y2="1941" stroke="#dcdcdc" stroke-width="1.8"/><rect x="2504" y="1932" width="5" height="5" fill="#3b4353"/><line x1="2495" y1="1941" x2="2509" y2="1927" stroke="#dcdcdc" stroke-width="1.8"/><rect x="2526" y="1927" width="32" height="2" fill="#dcdcdc"/><rect x="2526" y="1927" width="16" height="4" fill="#dcdcdc"/><rect x="2526" y="1935" width="32" height="2.5" fill="#dcdcdc"/><rect x="2526" y="1935" width="16" height="5.5" fill="#dcdcdc"/><rect x="2526" y="1945" width="32" height="3" fill="#dcdcdc"/><rect x="2526" y="1945" width="16" height="8" fill="#dcdcdc"/><rect x="2573" y="1927" width="26.5" height="26" fill="none" stroke="#dcdcdc" stroke-width="1.8"/><rect x="2576" y="1930" width="4" height="4" fill="#dcdcdc"/><rect x="2576" y="1938" width="4" height="4" fill="#dcdcdc"/><rect x="2576" y="1946" width="4" height="4" fill="#dcdcdc"/><rect x="2580" y="1934" width="4" height="4" fill="#dcdcdc"/><rect x="2580" y="1942" width="4" height="4" fill="#dcdcdc"/><rect x="2584" y="1930" width="4" height="4" fill="#dcdcdc"/><rect x="2584" y="1938" width="4" height="4" fill="#dcdcdc"/><rect x="2584" y="1946" width="4" height="4" fill="#dcdcdc"/><rect x="2588" y="1934" width="4" height="4" fill="#dcdcdc"/><rect x="2588" y="1942" width="4" height="4" fill="#dcdcdc"/><rect x="2592" y="1930" width="4" height="4" fill="#dcdcdc"/><rect x="2592" y="1938" width="4" height="4" fill="#dcdcdc"/><rect x="2592" y="1946" width="4" height="4" fill="#dcdcdc"/><path d="M2621,1924 H2617 V1952 H2621" fill="none" stroke="#f2f2f2" stroke-width="1.6"/><path d="M2639,1924 H2643 V1940" fill="none" stroke="#f2f2f2" stroke-width="1.6"/><rect x="2622.5" y="1929" width="10" height="6" fill="#4f6a5a" stroke="#6cc470" stroke-width="1.6"/><circle cx="2627.5" cy="1943" r="4.5" fill="#4f6a5a" stroke="#6cc470" stroke-width="1.6"/><polygon points="2635,1942 2645,1950 2641,1951 2644,1955 2642,1956 2639,1952 2636,1955" fill="#f2f2f2"/><polyline points="2690,1928 2667,1951 2690,1951" fill="none" stroke="#dcdcdc" stroke-width="1.8" /><rect x="2671" y="1938" width="6" height="6" fill="#dcdcdc" transform="rotate(0)"/><rect x="2698" y="1920" width="39.7" height="39.8" fill="#6b8fbf"/><rect x="2702" y="1924" width="9.8" height="10" fill="none" stroke="#f2f2f2" stroke-width="1.6"/><polyline points="2714,1928 2734,1928 2734,1955.6 2706,1955.6 2706,1937" fill="none" stroke="#f2f2f2" stroke-width="1.6"/><rect x="2742" y="1920" width="40" height="39.8" fill="#6b8fbf"/><g transform="translate(2746,1925) scale(1.0)"><path d="M14,0 L19.5,12.5 Q16.5,15.5 20,18.5 L28,32 L18.5,27.5 Q14,22 9.5,27.5 L0,32 L8,18.5 Q11.5,15.5 8.5,12.5 Z" fill="#f2f2f2"/></g><circle cx="2772" cy="1932" r="6" fill="#f2f2f2"/><g transform="translate(2790,1925) scale(1.0)"><path d="M14,0 L19.5,12.5 Q16.5,15.5 20,18.5 L28,32 L18.5,27.5 Q14,22 9.5,27.5 L0,32 L8,18.5 Q11.5,15.5 8.5,12.5 Z" fill="#dcdcdc"/></g><polygon points="2813,1924 2821,1924 2816,1931 2822,1931 2811,1940 2814,1933 2809,1933" fill="#f5d27a"/><g transform="translate(2836,1925) scale(1.0)"><path d="M14,0 L19.5,12.5 Q16.5,15.5 20,18.5 L28,32 L18.5,27.5 Q14,22 9.5,27.5 L0,32 L8,18.5 Q11.5,15.5 8.5,12.5 Z" fill="#dcdcdc"/></g><polygon points="2904,1936 2916,1936 2910,1943.4" fill="#b9b9b9"/><rect x="2934.5" y="1925" width="12.8" height="12.8" fill="none" stroke="#dcdcdc" stroke-width="1.6"/><circle cx="2958.7" cy="1936.8" r="6" fill="none" stroke="#dcdcdc" stroke-width="1.6"/><polygon points="2947,1943 2954.5,1955.5 2939.5,1955.5" fill="none" stroke="#dcdcdc" stroke-width="1.6"/><rect x="2990.4" y="1924.7" width="7.2" height="30.6" fill="#dcdcdc" transform="rotate(0 2994 1940)"/><rect x="2990.4" y="1924.7" width="7.2" height="30.6" fill="#dcdcdc" transform="rotate(45 2994 1940)"/><rect x="2990.4" y="1924.7" width="7.2" height="30.6" fill="#dcdcdc" transform="rotate(90 2994 1940)"/><rect x="2990.4" y="1924.7" width="7.2" height="30.6" fill="#dcdcdc" transform="rotate(135 2994 1940)"/><rect x="2990.4" y="1924.7" width="7.2" height="30.6" fill="#dcdcdc" transform="rotate(180 2994 1940)"/><rect x="2990.4" y="1924.7" width="7.2" height="30.6" fill="#dcdcdc" transform="rotate(225 2994 1940)"/><rect x="2990.4" y="1924.7" width="7.2" height="30.6" fill="#dcdcdc" transform="rotate(270 2994 1940)"/><rect x="2990.4" y="1924.7" width="7.2" height="30.6" fill="#dcdcdc" transform="rotate(315 2994 1940)"/><circle cx="2994" cy="1940" r="11.5" fill="#dcdcdc"/><circle cx="2994" cy="1940" r="5.2" fill="#3b4353"/></svg>
<div class="t" style="left:2871px;top:1928.95px;font-size:22.5px;color:#b9b9b9;">1:1</div>
</body></html>
